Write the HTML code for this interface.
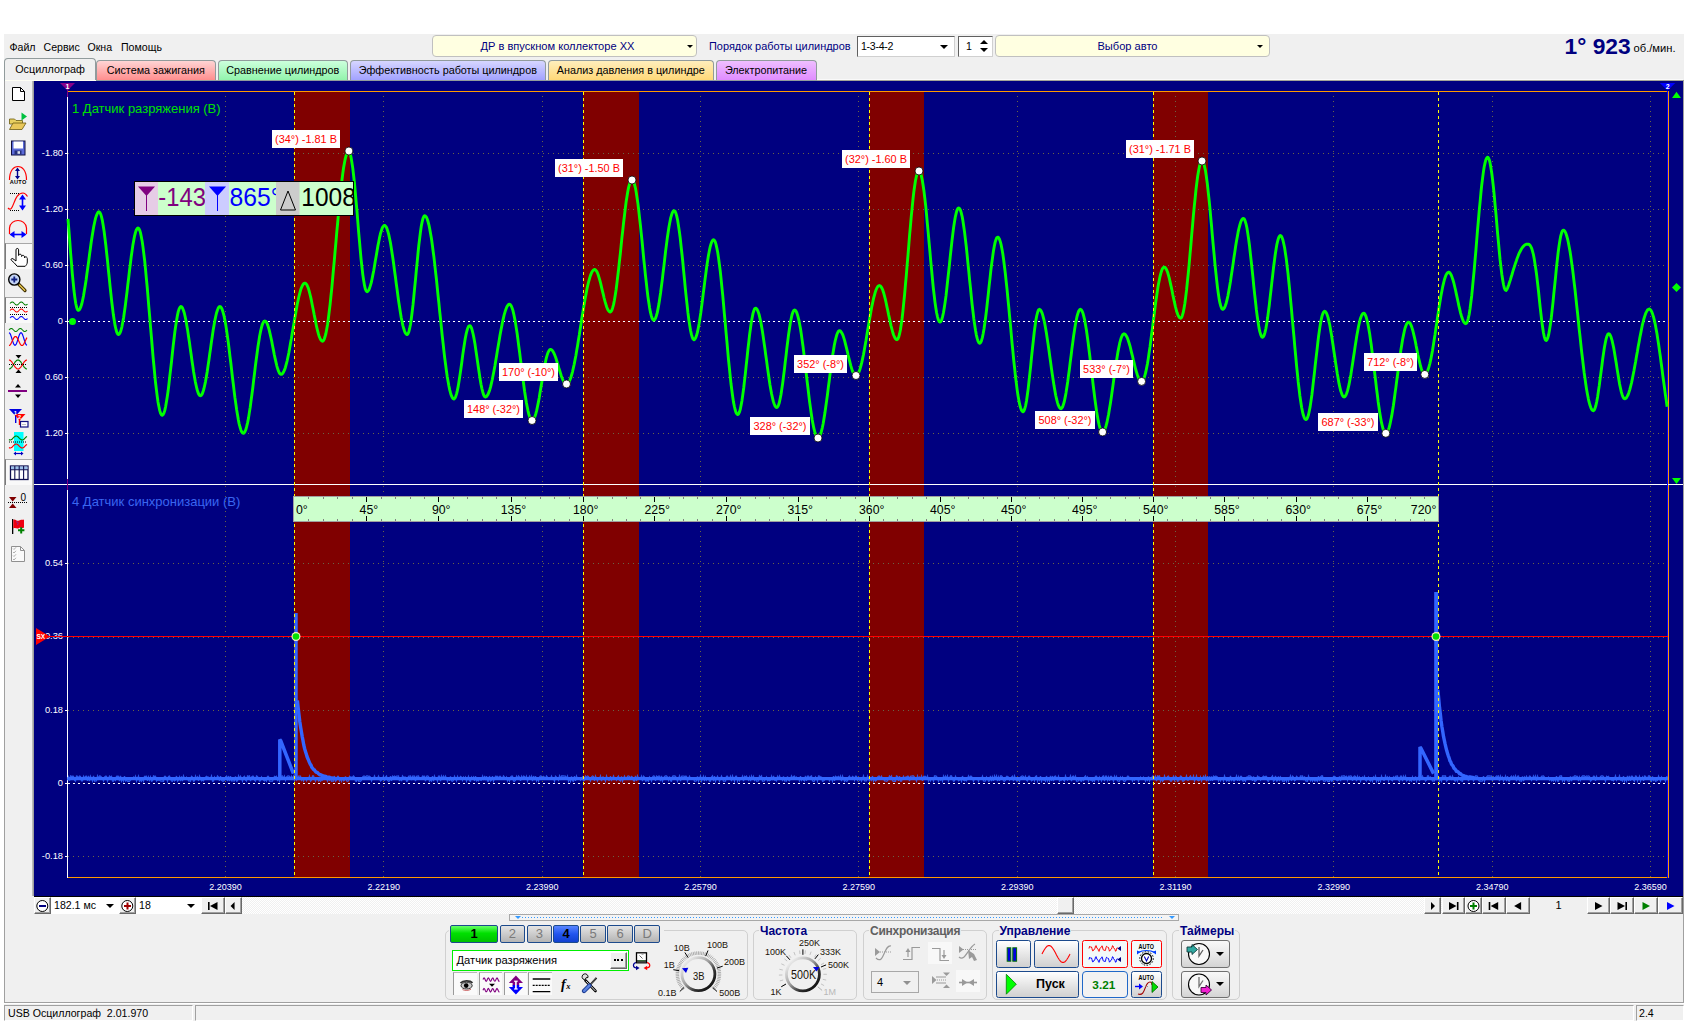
<!DOCTYPE html><html><head><meta charset="utf-8"><title>USB Осциллограф</title><style>
*{box-sizing:border-box;margin:0;padding:0}
html,body{width:1696px;height:1026px;overflow:hidden;background:#fff}
body{font-family:"Liberation Sans",sans-serif;font-size:11px;color:#000;position:relative}
.a{position:absolute}
#app{left:4px;top:34px;width:1680px;height:987px;background:#f0f0f0}
.menu span{position:absolute;top:41px;font-size:10.6px;white-space:pre}
.tab{position:absolute;top:60px;height:20px;border:1px solid #919b9c;border-bottom:none;border-radius:4px 4px 0 0;font-size:10.8px;text-align:center;line-height:19px;white-space:pre;overflow:hidden}
.dd{position:absolute;border:1px solid #c0c0c0;border-radius:4px;background:#ffffe1;color:#000080;font-size:11.1px;text-align:center;white-space:pre}
.arr{position:absolute;width:0;height:0;border-left:3.5px solid transparent;border-right:3.5px solid transparent;border-top:4px solid #000}
.btn3d{position:absolute;background:#f0f0f0;border:1px solid;border-color:#fff #696969 #696969 #fff;box-shadow:inset -1px -1px 0 #a0a0a0}
.grp{position:absolute;border:1px solid #d0d0d0;border-radius:5px}
.gt{position:absolute;font-weight:bold;font-size:12px;background:#f0f0f0;white-space:pre;line-height:12px;padding:0 1px}
.chb{position:absolute;top:925px;height:18px;border:1px solid #1c4a8c;border-radius:2px;text-align:center;font-size:13px;line-height:16px;color:#7a7a7a;background:linear-gradient(#e4e4e4,#b4b4b4)}
.cb{position:absolute;border:1px solid #1c4a8c;border-radius:2.5px;background:linear-gradient(#ffffff,#e2e2e2 60%,#d0d0d0)}
.kl{position:absolute;font-size:9px;white-space:pre;line-height:10px;color:#1a1208}
.st{position:absolute;top:1005px;height:16px;border:1px solid;border-color:#a0a0a0 #fff #fff #a0a0a0;font-size:10.6px;line-height:15px;padding-left:3px;white-space:pre}
</style></head><body>
<div id="app" class="a"></div>
<div class="menu"><span style="left:9.5px">Файл</span><span style="left:43.5px">Сервис</span><span style="left:87.5px">Окна</span><span style="left:121px">Помощь</span></div>
<div class="dd" style="left:432px;top:34.5px;width:265px;height:22px;line-height:20px;padding-right:14px">ДР в впускном коллекторе ХХ</div><div class="arr" style="left:686.5px;top:45px;border-left-width:3px;border-right-width:3px;border-top-width:3px"></div>
<div class="a" style="left:709px;top:40px;font-size:10.95px;color:#000080;white-space:pre">Порядок работы цилиндров</div>
<div class="a" style="left:857px;top:36px;width:98px;height:21px;background:#fff;border:1px solid #7f9db9;border-color:#606060 #d0d0d0 #d0d0d0 #606060;font-size:10.6px;line-height:19px;padding-left:3px;letter-spacing:-0.3px">1-3-4-2</div><div class="arr" style="left:940px;top:44.5px;border-left-width:4px;border-right-width:4px"></div>
<div class="a" style="left:958px;top:36px;width:35px;height:21px;background:#fff;border:1px solid;border-color:#606060 #d0d0d0 #d0d0d0 #606060;font-size:10.6px;line-height:19px;padding-left:7px">1</div>
<div class="a" style="left:979.5px;top:39.5px;width:0;height:0;border-left:4px solid transparent;border-right:4px solid transparent;border-bottom:4.5px solid #000"></div><div class="arr" style="left:979.5px;top:48px;border-left-width:4px;border-right-width:4px;border-top-width:4.5px"></div>
<div class="dd" style="left:995px;top:34.5px;width:275px;height:22px;line-height:20px;padding-right:10px">Выбор авто</div><div class="arr" style="left:1257px;top:45px;border-left-width:3px;border-right-width:3px;border-top-width:3px"></div>
<div class="a" style="left:1564.5px;top:33px;font-size:22.8px;font-weight:bold;color:#000080;white-space:pre;line-height:26px">1° 923</div>
<div class="a" style="left:1633.5px;top:42px;font-size:11.2px;white-space:pre">об./мин.</div>
<div class="a" style="left:4px;top:80px;width:1680px;height:1px;background:#919b9c"></div>
<div class="tab" style="left:95.5px;width:120.5px;background:linear-gradient(#ffd4d4 0%,#ff8e8e 100%)">Система зажигания</div>
<div class="tab" style="left:218px;width:129.5px;background:linear-gradient(#ccffdc 0%,#92f4ac 100%)">Сравнение цилиндров</div>
<div class="tab" style="left:349.5px;width:196.5px;background:linear-gradient(#d6d6ff 0%,#a2a2ff 100%)">Эффективность работы цилиндров</div>
<div class="tab" style="left:548px;width:165.5px;background:linear-gradient(#ffeebc 0%,#ffd878 100%)">Анализ давления в цилиндре</div>
<div class="tab" style="left:715.5px;width:101px;background:linear-gradient(#efbeff 0%,#e08cff 100%)">Электропитание</div>
<div class="tab" style="left:4px;top:58px;width:92px;height:22px;background:#f0f0f0;line-height:21px;border-color:#919b9c">Осциллограф</div><div class="a" style="left:5px;top:80px;width:91px;height:1px;background:#fffff4"></div><div class="a" style="left:817px;top:80px;width:866px;height:1px;background:#a4a498"></div><div class="a" style="left:817px;top:79px;width:866px;height:1px;background:#fafafa"></div>
<div class="a" style="left:4px;top:81px;width:1px;height:922px;background:#a0a0a0"></div>
<div class="a" style="left:32px;top:81px;width:2px;height:815px;background:linear-gradient(90deg,#c8c8c8,#909090)"></div>
<div class="a" style="left:5px;top:243px;width:27px;height:26px;background:#f9f9f9;border-left:1px solid #7a7a7a;border-top:1px solid #a8a8a8"></div>
<div class="a" style="left:5px;top:297px;width:27px;height:26px;background:#f9f9f9;border-left:1px solid #7a7a7a;border-top:1px solid #a8a8a8"></div>
<div class="a" style="left:5px;top:459px;width:27px;height:26px;background:#f9f9f9;border-left:1px solid #7a7a7a;border-top:1px solid #a8a8a8"></div>
<svg class="a" style="left:4px;top:81px;overflow:visible" width="30" height="490" viewBox="4 81 30 490" font-family="Liberation Sans,sans-serif">
<path d="M12.5,87.5 H20.5 L24.5,91.5 V100.5 H12.5 Z" fill="#fff" stroke="#000"/><path d="M20.5,87.5 V91.5 H24.5" fill="none" stroke="#000"/>
<path d="M9.5,119 H14.5 L16,120.5 H22.5 V124 H9.5Z" fill="#e8d060" stroke="#6b5a10" stroke-width="0.8"/>
<path d="M9.5,129.5 L13,123 H26 L22,129.5Z" fill="#e9c85a" stroke="#6b5a10" stroke-width="0.8"/>
<polygon points="21.5,112.5 21.5,120.5 27,116.5" fill="#00c040"/>
<rect x="11.5" y="141" width="13.5" height="14" fill="#5a6ad8" stroke="#101040"/>
<rect x="13.5" y="141.5" width="9.5" height="7" fill="#fff"/>
<rect x="14.5" y="150.5" width="7" height="4" fill="#26307a"/><rect x="17.5" y="151.2" width="2.5" height="2.6" fill="#d8e0f0"/>
<path d="M9.5,180 C9.5,170 14,166.5 18,166.5 C22,166.5 26.5,170 26.5,180" fill="none" stroke="#ff0000" stroke-width="1.2"/>
<path d="M17.5,169 V177" stroke="#000090" stroke-width="1.4"/><polygon points="15,171 20,171 17.5,167.5" fill="#000090"/><polygon points="15,176 20,176 17.5,179.5" fill="#000090"/>
<text x="9.7" y="184.3" font-size="5.6px" font-weight="bold" fill="#000" letter-spacing="0.3">AUTO</text>
<path d="M10,193.5 H20 M10,210.5 H20" stroke="#000" stroke-width="1" stroke-dasharray="1 1"/>
<path d="M8,208 C14,214 13,193 23,193 C25,193 26.5,195 27.5,196.5" fill="none" stroke="#ff0000" stroke-width="1.2"/>
<path d="M22.5,198 V206" stroke="#0000ff" stroke-width="1.6"/><polygon points="19,199.5 26,199.5 22.5,194.5" fill="#0000ff"/><polygon points="19,205.5 26,205.5 22.5,210.5" fill="#0000ff"/>
<path d="M9.5,234 V228 C10,223 14,220.5 18,220.5 C22,220.5 26,223 26.5,228 V234" fill="none" stroke="#ff0000" stroke-width="1.2"/>
<path d="M13,234.5 H23" stroke="#0000ff" stroke-width="1.6"/><polygon points="14.5,231 14.5,238 9.5,234.5" fill="#0000ff"/><polygon points="21.5,231 21.5,238 26.5,234.5" fill="#0000ff"/>
<path d="M16,249.8 C16,248 18.6,248 18.6,249.8 V255.5 C18.6,253.8 21.5,253.8 21.6,255.6 V256.5 C21.7,254.8 24.4,255 24.5,256.8 V257.8 C24.8,256.3 27.3,256.6 27.3,258.5 V262 C27.3,264 26.2,265.2 25.2,266.3 H17.2 C15.5,264 13.5,262 11.3,260.2 C10.5,259.2 11.8,258 13,258.8 L16,261 Z" fill="#fff" stroke="#000" stroke-width="1"/>
<path d="M18.5,284 L25,290.5" stroke="#403000" stroke-width="3.2" stroke-linecap="round"/><path d="M19.5,285 L24.7,290.2" stroke="#e8c850" stroke-width="1.4" stroke-linecap="round"/>
<circle cx="14.3" cy="279.5" r="5.6" fill="#c4d4f4" stroke="#000" stroke-width="1.4"/>
<path d="M11.3,279.5 H17.3 M14.3,276.5 V282.5" stroke="#102080" stroke-width="1.8"/>
<path d="M10.0,303.5 L10.5,303.0 L11.0,302.5 L11.5,302.2 L12.0,302.0 L12.5,302.0 L13.0,302.2 L13.5,302.5 L14.0,303.0 L14.5,303.5 L15.0,304.0 L15.5,304.5 L16.0,304.8 L16.5,305.0 L17.0,305.0 L17.5,304.8 L18.0,304.5 L18.5,304.0 L19.0,303.5 L19.5,303.0 L20.0,302.5 L20.5,302.2 L21.0,302.0 L21.5,302.0 L22.0,302.2 L22.5,302.5 L23.0,303.0 L23.5,303.5 L24.0,304.0 L24.5,304.5 L25.0,304.8 L25.5,305.0 L26.0,305.0 L26.5,304.8 L27.0,304.5 L27.5,304.0" fill="none" stroke="#008000" stroke-width="1.05"/>
<path d="M10.0,310.5 L10.5,310.0 L11.0,309.5 L11.5,309.2 L12.0,309.0 L12.5,309.0 L13.0,309.2 L13.5,309.5 L14.0,310.0 L14.5,310.5 L15.0,311.0 L15.5,311.5 L16.0,311.8 L16.5,312.0 L17.0,312.0 L17.5,311.8 L18.0,311.5 L18.5,311.0 L19.0,310.5 L19.5,310.0 L20.0,309.5 L20.5,309.2 L21.0,309.0 L21.5,309.0 L22.0,309.2 L22.5,309.5 L23.0,310.0 L23.5,310.5 L24.0,311.0 L24.5,311.5 L25.0,311.8 L25.5,312.0 L26.0,312.0 L26.5,311.8 L27.0,311.5 L27.5,311.0" fill="none" stroke="#ff0000" stroke-width="1.05"/>
<path d="M10.0,318.0 L10.5,317.5 L11.0,317.0 L11.5,316.7 L12.0,316.5 L12.5,316.5 L13.0,316.7 L13.5,317.0 L14.0,317.5 L14.5,318.0 L15.0,318.5 L15.5,319.0 L16.0,319.3 L16.5,319.5 L17.0,319.5 L17.5,319.3 L18.0,319.0 L18.5,318.5 L19.0,318.0 L19.5,317.5 L20.0,317.0 L20.5,316.7 L21.0,316.5 L21.5,316.5 L22.0,316.7 L22.5,317.0 L23.0,317.5 L23.5,318.0 L24.0,318.5 L24.5,319.0 L25.0,319.3 L25.5,319.5 L26.0,319.5 L26.5,319.3 L27.0,319.0 L27.5,318.5" fill="none" stroke="#0000ff" stroke-width="1.05"/>
<path d="M10,307.5 H27 M10,314.5 H27" stroke="#000" stroke-width="1" stroke-dasharray="1 1"/>
<path d="M9.0,330.0 L9.5,329.5 L10.0,329.0 L10.5,328.7 L11.0,328.5 L11.5,328.5 L12.0,328.7 L12.5,329.0 L13.0,329.5 L13.5,330.0 L14.0,330.5 L14.5,331.0 L15.0,331.3 L15.5,331.5 L16.0,331.5 L16.5,331.3 L17.0,331.0 L17.5,330.5 L18.0,330.0 L18.5,329.5 L19.0,329.0 L19.5,328.7 L20.0,328.5 L20.5,328.5 L21.0,328.7 L21.5,329.0 L22.0,329.5 L22.5,330.0 L23.0,330.5 L23.5,331.0 L24.0,331.3 L24.5,331.5 L25.0,331.5 L25.5,331.3 L26.0,331.0 L26.5,330.5 L27.0,330.0" fill="none" stroke="#008000" stroke-width="1.05"/>
<path d="M9.0,332.7 L9.5,332.9 L10.0,333.5 L10.5,334.5 L11.0,335.9 L11.5,337.4 L12.0,339.0 L12.5,340.6 L13.0,342.1 L13.5,343.5 L14.0,344.5 L14.5,345.1 L15.0,345.3 L15.5,345.1 L16.0,344.5 L16.5,343.5 L17.0,342.1 L17.5,340.6 L18.0,339.0 L18.5,337.4 L19.0,335.9 L19.5,334.5 L20.0,333.5 L20.5,332.9 L21.0,332.7 L21.5,332.9 L22.0,333.5 L22.5,334.5 L23.0,335.9 L23.5,337.4 L24.0,339.0 L24.5,340.6 L25.0,342.1 L25.5,343.5 L26.0,344.5 L26.5,345.1 L27.0,345.3" fill="none" stroke="#0000ff" stroke-width="1.2"/>
<path d="M9.0,345.5 L9.5,345.4 L10.0,345.0 L10.5,344.4 L11.0,343.6 L11.5,342.6 L12.0,341.5 L12.5,340.5 L13.0,339.4 L13.5,338.4 L14.0,337.6 L14.5,337.0 L15.0,336.6 L15.5,336.5 L16.0,336.6 L16.5,337.0 L17.0,337.6 L17.5,338.4 L18.0,339.4 L18.5,340.5 L19.0,341.5 L19.5,342.6 L20.0,343.6 L20.5,344.4 L21.0,345.0 L21.5,345.4 L22.0,345.5 L22.5,345.4 L23.0,345.0 L23.5,344.4 L24.0,343.6 L24.5,342.6 L25.0,341.5 L25.5,340.5 L26.0,339.4 L26.5,338.4 L27.0,337.6" fill="none" stroke="#ff0000" stroke-width="1.2"/>
<polygon points="15.5,355 21.5,355 18.5,358.5" fill="#000"/><polygon points="15.5,373 21.5,373 18.5,369.5" fill="#000"/>
<path d="M9.0,369.0 L9.5,368.9 L10.0,368.7 L10.5,368.4 L11.0,367.9 L11.5,367.4 L12.0,366.8 L12.5,366.0 L13.0,365.3 L13.5,364.5 L14.0,363.7 L14.5,363.0 L15.0,362.2 L15.5,361.6 L16.0,361.1 L16.5,360.6 L17.0,360.3 L17.5,360.1 L18.0,360.0 L18.5,360.1 L19.0,360.3 L19.5,360.6 L20.0,361.1 L20.5,361.6 L21.0,362.2 L21.5,363.0 L22.0,363.7 L22.5,364.5 L23.0,365.3 L23.5,366.0 L24.0,366.8 L24.5,367.4 L25.0,367.9 L25.5,368.4 L26.0,368.7 L26.5,368.9 L27.0,369.0" fill="none" stroke="#008000" stroke-width="1.2"/>
<path d="M9.0,360.0 L9.5,360.1 L10.0,360.3 L10.5,360.6 L11.0,361.1 L11.5,361.6 L12.0,362.2 L12.5,363.0 L13.0,363.7 L13.5,364.5 L14.0,365.3 L14.5,366.0 L15.0,366.8 L15.5,367.4 L16.0,367.9 L16.5,368.4 L17.0,368.7 L17.5,368.9 L18.0,369.0 L18.5,368.9 L19.0,368.7 L19.5,368.4 L20.0,367.9 L20.5,367.4 L21.0,366.8 L21.5,366.0 L22.0,365.3 L22.5,364.5 L23.0,363.7 L23.5,363.0 L24.0,362.2 L24.5,361.6 L25.0,361.1 L25.5,360.6 L26.0,360.3 L26.5,360.1 L27.0,360.0" fill="none" stroke="#ff0000" stroke-width="1.2"/>
<path d="M9,364.5 H26" stroke="#000" stroke-width="1" stroke-dasharray="1 1"/>
<polygon points="15,387.5 21,387.5 18,384" fill="#000"/><polygon points="15,394.5 21,394.5 18,398" fill="#000"/>
<rect x="8" y="390" width="19" height="2" fill="#800080"/>
<polygon points="9,409 22,409 15.5,416" fill="#0000e0"/><rect x="15" y="415" width="1.4" height="8" fill="#0000e0"/>
<polygon points="14,414 25.5,414 19.5,420.5" fill="#ff0000"/><rect x="18.8" y="419" width="1.4" height="6" fill="#ff0000"/>
<text x="13.8" y="414.5" font-size="6px" font-weight="bold" fill="#fff">1</text><text x="18" y="419.3" font-size="5.5px" font-weight="bold" fill="#fff">2</text>
<rect x="20.5" y="421.5" width="7.5" height="5.5" fill="#fff" stroke="#101080" stroke-width="1.2"/><path d="M22.5,424.5 H26" stroke="#606060" stroke-width="0.8" stroke-dasharray="1 1"/>
<rect x="14" y="432" width="9.5" height="19" fill="#00ffff"/>
<path d="M9.0,439.6 L9.5,439.9 L10.0,440.0 L10.5,440.0 L11.0,439.8 L11.5,439.6 L12.0,439.2 L12.5,438.7 L13.0,438.2 L13.5,437.7 L14.0,437.2 L14.5,436.7 L15.0,436.4 L15.5,436.1 L16.0,436.0 L16.5,436.0 L17.0,436.2 L17.5,436.4 L18.0,436.8 L18.5,437.3 L19.0,437.8 L19.5,438.3 L20.0,438.8 L20.5,439.3 L21.0,439.6 L21.5,439.9 L22.0,440.0 L22.5,440.0 L23.0,439.8 L23.5,439.6 L24.0,439.2 L24.5,438.7 L25.0,438.2 L25.5,437.7 L26.0,437.2 L26.5,436.7 L27.0,436.4" fill="none" stroke="#008000" stroke-width="1.2"/>
<path d="M9.0,447.6 L9.5,447.9 L10.0,448.0 L10.5,448.0 L11.0,447.8 L11.5,447.6 L12.0,447.2 L12.5,446.7 L13.0,446.2 L13.5,445.7 L14.0,445.2 L14.5,444.7 L15.0,444.4 L15.5,444.1 L16.0,444.0 L16.5,444.0 L17.0,444.2 L17.5,444.4 L18.0,444.8 L18.5,445.3 L19.0,445.8 L19.5,446.3 L20.0,446.8 L20.5,447.3 L21.0,447.6 L21.5,447.9 L22.0,448.0 L22.5,448.0 L23.0,447.8 L23.5,447.6 L24.0,447.2 L24.5,446.7 L25.0,446.2 L25.5,445.7 L26.0,445.2 L26.5,444.7 L27.0,444.4" fill="none" stroke="#ff0000" stroke-width="1.2"/>
<path d="M9,442 H27" stroke="#000" stroke-width="1" stroke-dasharray="1 1"/>
<path d="M15,453.5 H22" stroke="#0000c0" stroke-width="1.2"/><polygon points="16,451.5 16,455.5 13.5,453.5" fill="#0000c0"/><polygon points="21,451.5 21,455.5 23.5,453.5" fill="#0000c0"/>
<rect x="10.5" y="466" width="17.5" height="13.5" fill="#fff" stroke="#101050" stroke-width="1.3"/><rect x="11" y="466.5" width="16.5" height="3" fill="#9cc0ea"/>
<path d="M14.8,466 V479.5 M19.2,466 V479.5 M23.6,466 V479.5 M10.5,469.8 H28" stroke="#101050" stroke-width="1.1"/>
<polygon points="9,497 16.5,497 12.7,501.5" fill="#800000"/><polygon points="9,508 16.5,508 12.7,503.5" fill="#800000"/>
<path d="M8,502.5 H27" stroke="#000" stroke-width="1" stroke-dasharray="1 1"/>
<text x="20.5" y="500.5" font-size="10px" fill="#000">0</text>
<rect x="12" y="519" width="1.3" height="15" fill="#000"/>
<path d="M13.3,520 C15,518 17,522 19,520.5 C21,519 22.5,520 24,519.5 V527.5 C22,529 20.5,527 19,528 C17,529.5 15.5,527 13.3,528.5Z" fill="#ee0010"/>
<path d="M16,522 c2,-1 3,2 1,3" stroke="#8030a0" stroke-width="1" fill="none"/>
<path d="M18,530.3 H24.4 M21.2,527.2 V533.5" stroke="#008000" stroke-width="2"/>
<path d="M11.5,546.5 H20.5 L24.5,550.5 V561.5 H11.5Z" fill="#fafafa" stroke="#909090"/><path d="M20.5,546.5 V550.5 H24.5" fill="none" stroke="#909090"/>
<path d="M13,548.5 l1,1 l2,-2.2" fill="none" stroke="#a8a8a8" stroke-width="0.9"/>
<path d="M13,552 l1,1 l2,-2.2" fill="none" stroke="#a8a8a8" stroke-width="0.9"/>
<path d="M13,555.5 l1,1 l2,-2.2" fill="none" stroke="#a8a8a8" stroke-width="0.9"/>
<path d="M13,559 l1,1 l2,-2.2" fill="none" stroke="#a8a8a8" stroke-width="0.9"/>
</svg>
<svg id="plot" width="1649" height="815" viewBox="34 81 1649 815" style="position:absolute;left:34px;top:81px;font-family:'Liberation Sans',sans-serif">
<rect x="34" y="81" width="1650" height="815" fill="#000080"/>
<rect x="294" y="92" width="56" height="785" fill="#800000"/>
<rect x="583" y="92" width="56" height="785" fill="#800000"/>
<rect x="869" y="92" width="55" height="785" fill="#800000"/>
<rect x="1153" y="92" width="55" height="785" fill="#800000"/>
<g stroke="#6a6446" stroke-width="1" stroke-dasharray="1 4" shape-rendering="crispEdges">
<line x1="68" y1="153.5" x2="1667" y2="153.5"/>
<line x1="68" y1="209.5" x2="1667" y2="209.5"/>
<line x1="68" y1="265.5" x2="1667" y2="265.5"/>
<line x1="68" y1="377.5" x2="1667" y2="377.5"/>
<line x1="68" y1="433.5" x2="1667" y2="433.5"/>
<line x1="68" y1="563.5" x2="1667" y2="563.5"/>
<line x1="68" y1="637.5" x2="1667" y2="637.5"/>
<line x1="68" y1="710.5" x2="1667" y2="710.5"/>
<line x1="68" y1="856.5" x2="1667" y2="856.5"/>
<line x1="225.5" y1="96" x2="225.5" y2="484"/>
<line x1="225.5" y1="486" x2="225.5" y2="877"/>
<line x1="383.5" y1="96" x2="383.5" y2="484"/>
<line x1="383.5" y1="486" x2="383.5" y2="877"/>
<line x1="542.5" y1="96" x2="542.5" y2="484"/>
<line x1="542.5" y1="486" x2="542.5" y2="877"/>
<line x1="700.5" y1="96" x2="700.5" y2="484"/>
<line x1="700.5" y1="486" x2="700.5" y2="877"/>
<line x1="858.5" y1="96" x2="858.5" y2="484"/>
<line x1="858.5" y1="486" x2="858.5" y2="877"/>
<line x1="1017.5" y1="96" x2="1017.5" y2="484"/>
<line x1="1017.5" y1="486" x2="1017.5" y2="877"/>
<line x1="1175.5" y1="96" x2="1175.5" y2="484"/>
<line x1="1175.5" y1="486" x2="1175.5" y2="877"/>
<line x1="1333.5" y1="96" x2="1333.5" y2="484"/>
<line x1="1333.5" y1="486" x2="1333.5" y2="877"/>
<line x1="1492.5" y1="96" x2="1492.5" y2="484"/>
<line x1="1492.5" y1="486" x2="1492.5" y2="877"/>
<line x1="1650.5" y1="96" x2="1650.5" y2="484"/>
<line x1="1650.5" y1="486" x2="1650.5" y2="877"/>
</g>
<g stroke="#ffffff" stroke-width="1" stroke-dasharray="2 3" shape-rendering="crispEdges">
<line x1="68" y1="321.5" x2="1667" y2="321.5"/>
<line x1="68" y1="783.5" x2="1668" y2="783.5"/>
</g>
<g shape-rendering="crispEdges">
<line x1="68" y1="91.5" x2="1669" y2="91.5" stroke="#ff9900"/>
<line x1="68" y1="877.5" x2="1669" y2="877.5" stroke="#ff9900"/>
<line x1="1668.5" y1="91" x2="1668.5" y2="878" stroke="#ff9900"/>
<line x1="67.5" y1="97" x2="67.5" y2="878" stroke="#ffffff"/>
<line x1="34" y1="484.5" x2="1684" y2="484.5" stroke="#ffffff"/>
<line x1="67.5" y1="479" x2="67.5" y2="490" stroke="#800080"/>
<line x1="1667.5" y1="91" x2="1667.5" y2="878" stroke="#0000ff"/>
</g>
<g fill="#ffffff" font-size="9.3px" text-anchor="end">
<text x="63" y="156.2">-1.80</text>
<rect x="65" y="153" width="2" height="1"/>
<text x="63" y="212.2">-1.20</text>
<rect x="65" y="209" width="2" height="1"/>
<text x="63" y="268.2">-0.60</text>
<rect x="65" y="265" width="2" height="1"/>
<text x="63" y="324.2">0</text>
<rect x="65" y="321" width="2" height="1"/>
<text x="63" y="380.2">0.60</text>
<rect x="65" y="377" width="2" height="1"/>
<text x="63" y="436.2">1.20</text>
<rect x="65" y="433" width="2" height="1"/>
<text x="63" y="566.2">0.54</text>
<rect x="65" y="563" width="2" height="1"/>
<text x="63" y="639.2">0.36</text>
<rect x="65" y="636" width="2" height="1"/>
<text x="63" y="713.2">0.18</text>
<rect x="65" y="710" width="2" height="1"/>
<text x="63" y="786.2">0</text>
<rect x="65" y="783" width="2" height="1"/>
<text x="63" y="859.2">-0.18</text>
<rect x="65" y="856" width="2" height="1"/>
</g>
<g fill="#ffffff" font-size="9px" text-anchor="middle">
<text x="225.5" y="890">2.20390</text>
<text x="383.8" y="890">2.22190</text>
<text x="542.2" y="890">2.23990</text>
<text x="700.5" y="890">2.25790</text>
<text x="858.8" y="890">2.27590</text>
<text x="1017.2" y="890">2.29390</text>
<text x="1175.5" y="890">2.31190</text>
<text x="1333.8" y="890">2.32990</text>
<text x="1492.2" y="890">2.34790</text>
<text x="1650.5" y="890">2.36590</text>
</g>
<text x="72" y="113" font-size="13px" fill="#00e000">1 Датчик разряжения (В)</text>
<text x="72" y="506" font-size="13px" fill="#3a66f0">4 Датчик синхронизации (В)</text>
<line x1="46" y1="636.5" x2="1668" y2="636.5" stroke="#ff0000" shape-rendering="crispEdges"/>
<polygon points="36,628 36,645 50,636.5" fill="#ff0000"/>
<text x="36.5" y="639" font-size="6.5px" font-weight="bold" fill="#fff">SX</text>
<line x1="67.5" y1="778.6" x2="1668" y2="778.6" stroke="#3366ff" stroke-width="3.3"/><path d="M67.5,780.1 L68.5,777.1 L69.5,780.8 L70.5,776.0 L71.5,776.4 L72.5,776.2 L73.5,776.4 L74.5,780.1 L75.5,781.0 L76.5,776.0 L77.5,776.2 L78.5,778.6 L79.5,776.0 L80.5,776.4 L81.5,780.8 L82.5,780.8 L83.5,776.4 L84.5,778.6 L85.5,776.4 L86.5,776.2 L87.5,780.8 L88.5,776.0 L89.5,781.0 L90.5,776.4 L91.5,778.6 L92.5,781.0 L93.5,776.0 L94.5,781.0 L95.5,781.0 L96.5,780.8 L97.5,776.0 L98.5,778.6 L99.5,776.0 L100.5,776.2 L101.5,777.1 L102.5,778.6 L103.5,780.8 L104.5,777.1 L105.5,776.2 L106.5,776.4 L107.5,781.0 L108.5,778.6 L109.5,776.2 L110.5,777.1 L111.5,776.4 L112.5,781.0 L113.5,781.0 L114.5,778.6 L115.5,780.1 L116.5,776.4 L117.5,776.2 L118.5,776.4 L119.5,781.0 L120.5,776.0 L121.5,781.0 L122.5,778.6 L123.5,781.2 L124.5,776.2 L125.5,780.8 L126.5,780.1 L127.5,781.2 L128.5,781.0 L129.5,781.2 L130.5,780.1 L131.5,778.6 L132.5,778.6 L133.5,777.1 L134.5,778.6 L135.5,776.4 L136.5,781.0 L137.5,778.6 L138.5,776.2 L139.5,781.2 L140.5,780.1 L141.5,781.2 L142.5,778.6 L143.5,781.0 L144.5,776.4 L145.5,776.4 L146.5,776.2 L147.5,780.8 L148.5,777.1 L149.5,780.1 L150.5,777.1 L151.5,781.2 L152.5,780.8 L153.5,776.0 L154.5,776.4 L155.5,776.2 L156.5,781.0 L157.5,780.1 L158.5,780.1 L159.5,780.1 L160.5,781.0 L161.5,781.2 L162.5,781.0 L163.5,781.2 L164.5,776.4 L165.5,776.4 L166.5,778.6 L167.5,781.2 L168.5,776.4 L169.5,776.0 L170.5,778.6 L171.5,781.0 L172.5,781.2 L173.5,778.6 L174.5,780.8 L175.5,780.1 L176.5,776.0 L177.5,781.2 L178.5,780.1 L179.5,777.1 L180.5,781.0 L181.5,776.4 L182.5,781.2 L183.5,776.0 L184.5,778.6 L185.5,778.6 L186.5,777.1 L187.5,778.6 L188.5,780.8 L189.5,780.8 L190.5,781.2 L191.5,776.4 L192.5,777.1 L193.5,781.2 L194.5,780.8 L195.5,776.2 L196.5,778.6 L197.5,777.1 L198.5,780.8 L199.5,776.2 L200.5,778.6 L201.5,780.8 L202.5,780.1 L203.5,780.8 L204.5,778.6 L205.5,777.1 L206.5,776.4 L207.5,777.1 L208.5,777.1 L209.5,778.6 L210.5,778.6 L211.5,776.0 L212.5,781.2 L213.5,781.0 L214.5,777.1 L215.5,778.6 L216.5,778.6 L217.5,776.0 L218.5,777.1 L219.5,780.8 L220.5,776.2 L221.5,780.1 L222.5,781.0 L223.5,781.0 L224.5,780.1 L225.5,777.1 L226.5,776.2 L227.5,781.0 L228.5,776.0 L229.5,781.2 L230.5,776.2 L231.5,780.8 L232.5,780.8 L233.5,780.8 L234.5,780.8 L235.5,776.4 L236.5,781.2 L237.5,780.8 L238.5,776.0 L239.5,778.6 L240.5,776.4 L241.5,778.6 L242.5,781.2 L243.5,777.1 L244.5,776.4 L245.5,780.1 L246.5,781.0 L247.5,776.0 L248.5,776.4 L249.5,776.0 L250.5,781.0 L251.5,777.1 L252.5,776.2 L253.5,776.4 L254.5,780.1 L255.5,781.0 L256.5,776.0 L257.5,776.4 L258.5,778.6 L259.5,781.0 L260.5,780.8 L261.5,777.1 L262.5,778.6 L263.5,780.1 L264.5,781.0 L265.5,780.1 L266.5,781.2 L267.5,776.4 L268.5,776.4 L269.5,781.2 L270.5,781.2 L271.5,781.2 L272.5,781.2 L273.5,778.6 L274.5,776.4 L275.5,777.1 L276.5,776.4 L277.5,780.1 L278.5,778.6 L279.5,781.2 L280.5,777.1 L281.5,776.2 L282.5,776.0 L283.5,778.6 L284.5,776.2 L285.5,780.1 L286.5,777.1 L287.5,776.2 L288.5,776.0 L289.5,776.2 L290.5,778.6 L291.5,776.4 L292.5,778.6 L293.5,776.2 L294.5,780.1 L295.5,777.1 L296.5,780.1 L297.5,778.6 L298.5,776.2 L299.5,776.2 L300.5,776.2 L301.5,780.1 L302.5,778.6 L303.5,781.0 L304.5,778.6 L305.5,778.6 L306.5,780.8 L307.5,778.6 L308.5,778.6 L309.5,776.2 L310.5,781.2 L311.5,780.1 L312.5,776.0 L313.5,776.0 L314.5,778.6 L315.5,781.2 L316.5,778.6 L317.5,778.6 L318.5,781.0 L319.5,780.1 L320.5,781.2 L321.5,780.1 L322.5,780.1 L323.5,776.4 L324.5,778.6 L325.5,776.4 L326.5,778.6 L327.5,781.2 L328.5,778.6 L329.5,780.1 L330.5,778.6 L331.5,781.2 L332.5,781.0 L333.5,781.0 L334.5,776.0 L335.5,781.2 L336.5,780.1 L337.5,776.4 L338.5,776.4 L339.5,780.8 L340.5,778.6 L341.5,781.2 L342.5,777.1 L343.5,780.8 L344.5,780.1 L345.5,776.4 L346.5,780.8 L347.5,781.2 L348.5,780.8 L349.5,776.4 L350.5,777.1 L351.5,777.1 L352.5,777.1 L353.5,776.0 L354.5,777.1 L355.5,781.0 L356.5,781.2 L357.5,777.1 L358.5,781.0 L359.5,781.0 L360.5,781.2 L361.5,780.1 L362.5,777.1 L363.5,776.2 L364.5,776.2 L365.5,777.1 L366.5,776.0 L367.5,776.0 L368.5,776.4 L369.5,776.2 L370.5,777.1 L371.5,780.8 L372.5,778.6 L373.5,778.6 L374.5,776.0 L375.5,778.6 L376.5,778.6 L377.5,778.6 L378.5,776.2 L379.5,778.6 L380.5,781.0 L381.5,780.1 L382.5,778.6 L383.5,776.2 L384.5,780.8 L385.5,777.1 L386.5,776.0 L387.5,780.1 L388.5,781.2 L389.5,781.0 L390.5,776.2 L391.5,780.8 L392.5,776.2 L393.5,777.1 L394.5,776.2 L395.5,777.1 L396.5,776.2 L397.5,776.2 L398.5,776.0 L399.5,781.2 L400.5,777.1 L401.5,781.0 L402.5,776.0 L403.5,777.1 L404.5,777.1 L405.5,777.1 L406.5,781.2 L407.5,781.0 L408.5,776.4 L409.5,776.2 L410.5,776.0 L411.5,780.1 L412.5,776.2 L413.5,776.2 L414.5,776.2 L415.5,781.2 L416.5,776.4 L417.5,776.2 L418.5,776.0 L419.5,778.6 L420.5,778.6 L421.5,778.6 L422.5,776.0 L423.5,776.4 L424.5,776.2 L425.5,781.2 L426.5,776.2 L427.5,776.0 L428.5,776.4 L429.5,781.2 L430.5,780.1 L431.5,781.0 L432.5,776.2 L433.5,781.0 L434.5,776.2 L435.5,778.6 L436.5,778.6 L437.5,781.2 L438.5,776.2 L439.5,776.2 L440.5,781.2 L441.5,776.2 L442.5,778.6 L443.5,776.2 L444.5,778.6 L445.5,776.2 L446.5,778.6 L447.5,781.2 L448.5,777.1 L449.5,780.8 L450.5,776.4 L451.5,780.8 L452.5,781.2 L453.5,780.1 L454.5,776.4 L455.5,778.6 L456.5,780.8 L457.5,776.4 L458.5,778.6 L459.5,778.6 L460.5,776.4 L461.5,777.1 L462.5,780.1 L463.5,777.1 L464.5,778.6 L465.5,777.1 L466.5,781.2 L467.5,778.6 L468.5,776.4 L469.5,780.8 L470.5,781.2 L471.5,777.1 L472.5,778.6 L473.5,777.1 L474.5,780.8 L475.5,776.2 L476.5,780.8 L477.5,780.1 L478.5,780.8 L479.5,778.6 L480.5,780.1 L481.5,780.1 L482.5,776.4 L483.5,780.1 L484.5,776.0 L485.5,780.1 L486.5,776.2 L487.5,781.2 L488.5,781.2 L489.5,776.0 L490.5,780.8 L491.5,780.1 L492.5,776.2 L493.5,781.0 L494.5,778.6 L495.5,776.2 L496.5,776.4 L497.5,776.4 L498.5,778.6 L499.5,776.4 L500.5,776.4 L501.5,778.6 L502.5,778.6 L503.5,776.0 L504.5,777.1 L505.5,778.6 L506.5,777.1 L507.5,780.8 L508.5,778.6 L509.5,780.8 L510.5,777.1 L511.5,776.2 L512.5,776.2 L513.5,781.0 L514.5,781.2 L515.5,780.1 L516.5,776.4 L517.5,778.6 L518.5,776.0 L519.5,777.1 L520.5,780.8 L521.5,776.4 L522.5,778.6 L523.5,776.0 L524.5,776.4 L525.5,778.6 L526.5,776.4 L527.5,781.0 L528.5,778.6 L529.5,776.4 L530.5,778.6 L531.5,776.4 L532.5,781.2 L533.5,776.0 L534.5,780.1 L535.5,776.2 L536.5,780.8 L537.5,778.6 L538.5,781.0 L539.5,777.1 L540.5,776.0 L541.5,776.2 L542.5,778.6 L543.5,776.4 L544.5,777.1 L545.5,778.6 L546.5,776.0 L547.5,777.1 L548.5,778.6 L549.5,778.6 L550.5,778.6 L551.5,776.2 L552.5,778.6 L553.5,778.6 L554.5,781.2 L555.5,776.2 L556.5,777.1 L557.5,778.6 L558.5,780.1 L559.5,776.0 L560.5,778.6 L561.5,776.0 L562.5,776.0 L563.5,776.0 L564.5,776.2 L565.5,776.2 L566.5,778.6 L567.5,776.2 L568.5,781.2 L569.5,778.6 L570.5,781.2 L571.5,776.4 L572.5,780.8 L573.5,781.2 L574.5,776.2 L575.5,780.8 L576.5,776.2 L577.5,778.6 L578.5,778.6 L579.5,778.6 L580.5,780.1 L581.5,778.6 L582.5,777.1 L583.5,780.8 L584.5,780.1 L585.5,776.0 L586.5,777.1 L587.5,776.0 L588.5,776.4 L589.5,778.6 L590.5,780.8 L591.5,777.1 L592.5,776.0 L593.5,776.4 L594.5,780.8 L595.5,776.2 L596.5,778.6 L597.5,781.0 L598.5,778.6 L599.5,778.6 L600.5,776.0 L601.5,781.2 L602.5,777.1 L603.5,777.1 L604.5,778.6 L605.5,781.2 L606.5,776.0 L607.5,778.6 L608.5,780.1 L609.5,780.1 L610.5,776.2 L611.5,780.1 L612.5,778.6 L613.5,776.0 L614.5,778.6 L615.5,778.6 L616.5,780.1 L617.5,777.1 L618.5,776.0 L619.5,780.1 L620.5,780.8 L621.5,776.4 L622.5,781.2 L623.5,778.6 L624.5,776.2 L625.5,778.6 L626.5,778.6 L627.5,776.2 L628.5,776.0 L629.5,776.4 L630.5,778.6 L631.5,776.4 L632.5,777.1 L633.5,780.8 L634.5,781.0 L635.5,776.0 L636.5,780.8 L637.5,776.0 L638.5,778.6 L639.5,778.6 L640.5,778.6 L641.5,776.4 L642.5,781.0 L643.5,776.2 L644.5,777.1 L645.5,781.0 L646.5,780.8 L647.5,780.1 L648.5,781.2 L649.5,777.1 L650.5,778.6 L651.5,781.0 L652.5,777.1 L653.5,776.0 L654.5,776.2 L655.5,780.8 L656.5,776.2 L657.5,777.1 L658.5,776.2 L659.5,776.2 L660.5,781.0 L661.5,776.0 L662.5,781.0 L663.5,778.6 L664.5,776.4 L665.5,776.0 L666.5,776.0 L667.5,777.1 L668.5,780.1 L669.5,776.4 L670.5,780.8 L671.5,781.2 L672.5,776.2 L673.5,776.0 L674.5,776.0 L675.5,776.2 L676.5,778.6 L677.5,781.2 L678.5,778.6 L679.5,776.0 L680.5,781.2 L681.5,776.4 L682.5,776.2 L683.5,776.2 L684.5,776.4 L685.5,776.2 L686.5,776.4 L687.5,781.2 L688.5,778.6 L689.5,776.4 L690.5,778.6 L691.5,778.6 L692.5,778.6 L693.5,778.6 L694.5,781.2 L695.5,781.2 L696.5,780.8 L697.5,776.4 L698.5,781.2 L699.5,778.6 L700.5,776.0 L701.5,781.0 L702.5,778.6 L703.5,776.4 L704.5,781.0 L705.5,777.1 L706.5,780.1 L707.5,778.6 L708.5,778.6 L709.5,781.0 L710.5,781.0 L711.5,777.1 L712.5,776.0 L713.5,781.2 L714.5,776.0 L715.5,781.2 L716.5,778.6 L717.5,776.4 L718.5,778.6 L719.5,781.2 L720.5,778.6 L721.5,776.2 L722.5,778.6 L723.5,781.2 L724.5,781.2 L725.5,781.2 L726.5,776.4 L727.5,776.2 L728.5,778.6 L729.5,778.6 L730.5,776.4 L731.5,781.2 L732.5,776.0 L733.5,778.6 L734.5,781.2 L735.5,776.4 L736.5,776.2 L737.5,781.2 L738.5,778.6 L739.5,780.8 L740.5,778.6 L741.5,778.6 L742.5,776.4 L743.5,781.0 L744.5,776.4 L745.5,777.1 L746.5,776.2 L747.5,778.6 L748.5,780.1 L749.5,777.1 L750.5,781.0 L751.5,776.2 L752.5,778.6 L753.5,776.4 L754.5,780.1 L755.5,778.6 L756.5,781.2 L757.5,781.2 L758.5,780.8 L759.5,776.0 L760.5,777.1 L761.5,776.0 L762.5,781.2 L763.5,781.2 L764.5,780.8 L765.5,778.6 L766.5,777.1 L767.5,780.8 L768.5,780.1 L769.5,780.8 L770.5,780.1 L771.5,776.4 L772.5,780.1 L773.5,776.0 L774.5,780.1 L775.5,780.1 L776.5,780.8 L777.5,776.4 L778.5,778.6 L779.5,776.0 L780.5,778.6 L781.5,778.6 L782.5,780.1 L783.5,776.4 L784.5,780.8 L785.5,780.8 L786.5,781.0 L787.5,776.4 L788.5,780.1 L789.5,780.8 L790.5,778.6 L791.5,776.0 L792.5,778.6 L793.5,776.4 L794.5,776.0 L795.5,778.6 L796.5,777.1 L797.5,778.6 L798.5,778.6 L799.5,780.8 L800.5,776.2 L801.5,780.1 L802.5,778.6 L803.5,780.1 L804.5,780.8 L805.5,776.0 L806.5,780.8 L807.5,776.2 L808.5,776.2 L809.5,778.6 L810.5,776.4 L811.5,776.0 L812.5,780.8 L813.5,781.2 L814.5,781.0 L815.5,777.1 L816.5,778.6 L817.5,781.2 L818.5,776.0 L819.5,776.2 L820.5,777.1 L821.5,777.1 L822.5,781.2 L823.5,780.8 L824.5,780.1 L825.5,778.6 L826.5,778.6 L827.5,778.6 L828.5,778.6 L829.5,780.8 L830.5,778.6 L831.5,778.6 L832.5,781.2 L833.5,776.2 L834.5,780.8 L835.5,776.4 L836.5,777.1 L837.5,777.1 L838.5,776.4 L839.5,778.6 L840.5,776.2 L841.5,781.2 L842.5,776.2 L843.5,778.6 L844.5,781.2 L845.5,780.1 L846.5,781.2 L847.5,780.8 L848.5,777.1 L849.5,776.2 L850.5,778.6 L851.5,778.6 L852.5,776.4 L853.5,777.1 L854.5,780.1 L855.5,776.2 L856.5,776.4 L857.5,780.1 L858.5,778.6 L859.5,780.1 L860.5,778.6 L861.5,781.0 L862.5,778.6 L863.5,776.0 L864.5,780.8 L865.5,780.8 L866.5,780.8 L867.5,776.2 L868.5,778.6 L869.5,780.8 L870.5,778.6 L871.5,780.1 L872.5,776.0 L873.5,781.2 L874.5,778.6 L875.5,781.0 L876.5,780.1 L877.5,777.1 L878.5,776.2 L879.5,776.2 L880.5,778.6 L881.5,776.4 L882.5,778.6 L883.5,778.6 L884.5,780.8 L885.5,780.8 L886.5,781.2 L887.5,780.8 L888.5,778.6 L889.5,776.0 L890.5,777.1 L891.5,776.0 L892.5,780.8 L893.5,781.2 L894.5,781.0 L895.5,781.2 L896.5,776.0 L897.5,776.4 L898.5,780.8 L899.5,776.2 L900.5,781.2 L901.5,781.2 L902.5,778.6 L903.5,776.4 L904.5,778.6 L905.5,777.1 L906.5,777.1 L907.5,776.2 L908.5,776.4 L909.5,781.2 L910.5,776.4 L911.5,776.2 L912.5,776.0 L913.5,776.0 L914.5,777.1 L915.5,778.6 L916.5,781.0 L917.5,776.0 L918.5,778.6 L919.5,777.1 L920.5,778.6 L921.5,776.2 L922.5,780.8 L923.5,776.4 L924.5,776.4 L925.5,776.4 L926.5,778.6 L927.5,776.2 L928.5,781.0 L929.5,778.6 L930.5,780.8 L931.5,778.6 L932.5,778.6 L933.5,781.0 L934.5,776.0 L935.5,776.0 L936.5,776.2 L937.5,778.6 L938.5,781.2 L939.5,778.6 L940.5,780.1 L941.5,778.6 L942.5,781.2 L943.5,776.2 L944.5,778.6 L945.5,776.2 L946.5,778.6 L947.5,776.0 L948.5,780.8 L949.5,778.6 L950.5,776.0 L951.5,776.0 L952.5,778.6 L953.5,781.2 L954.5,780.8 L955.5,776.4 L956.5,778.6 L957.5,778.6 L958.5,780.8 L959.5,780.1 L960.5,778.6 L961.5,781.2 L962.5,776.0 L963.5,780.1 L964.5,780.8 L965.5,780.1 L966.5,780.8 L967.5,778.6 L968.5,776.0 L969.5,778.6 L970.5,776.2 L971.5,776.4 L972.5,778.6 L973.5,781.2 L974.5,778.6 L975.5,778.6 L976.5,778.6 L977.5,778.6 L978.5,781.2 L979.5,778.6 L980.5,778.6 L981.5,778.6 L982.5,776.4 L983.5,781.0 L984.5,781.2 L985.5,781.0 L986.5,777.1 L987.5,778.6 L988.5,781.2 L989.5,780.8 L990.5,776.0 L991.5,781.0 L992.5,777.1 L993.5,780.8 L994.5,776.0 L995.5,778.6 L996.5,776.0 L997.5,781.0 L998.5,777.1 L999.5,780.8 L1000.5,776.0 L1001.5,776.0 L1002.5,777.1 L1003.5,780.8 L1004.5,781.2 L1005.5,780.1 L1006.5,776.4 L1007.5,776.4 L1008.5,777.1 L1009.5,780.1 L1010.5,778.6 L1011.5,777.1 L1012.5,776.2 L1013.5,781.2 L1014.5,776.0 L1015.5,778.6 L1016.5,780.8 L1017.5,780.1 L1018.5,780.1 L1019.5,781.2 L1020.5,777.1 L1021.5,776.4 L1022.5,776.0 L1023.5,776.4 L1024.5,778.6 L1025.5,776.4 L1026.5,780.1 L1027.5,780.8 L1028.5,776.4 L1029.5,776.2 L1030.5,778.6 L1031.5,780.8 L1032.5,780.1 L1033.5,778.6 L1034.5,780.8 L1035.5,776.4 L1036.5,776.0 L1037.5,781.2 L1038.5,778.6 L1039.5,780.1 L1040.5,776.2 L1041.5,781.2 L1042.5,778.6 L1043.5,780.1 L1044.5,780.1 L1045.5,781.2 L1046.5,776.0 L1047.5,780.8 L1048.5,778.6 L1049.5,780.8 L1050.5,776.0 L1051.5,780.8 L1052.5,776.0 L1053.5,781.2 L1054.5,776.4 L1055.5,776.0 L1056.5,778.6 L1057.5,778.6 L1058.5,776.4 L1059.5,781.0 L1060.5,780.1 L1061.5,780.1 L1062.5,778.6 L1063.5,780.1 L1064.5,781.0 L1065.5,776.0 L1066.5,778.6 L1067.5,780.1 L1068.5,778.6 L1069.5,778.6 L1070.5,776.0 L1071.5,781.0 L1072.5,776.4 L1073.5,776.0 L1074.5,778.6 L1075.5,776.4 L1076.5,781.2 L1077.5,781.2 L1078.5,780.8 L1079.5,778.6 L1080.5,780.8 L1081.5,781.2 L1082.5,777.1 L1083.5,781.2 L1084.5,777.1 L1085.5,776.0 L1086.5,778.6 L1087.5,777.1 L1088.5,781.0 L1089.5,778.6 L1090.5,780.1 L1091.5,780.1 L1092.5,781.2 L1093.5,780.1 L1094.5,781.0 L1095.5,776.4 L1096.5,776.2 L1097.5,778.6 L1098.5,780.8 L1099.5,777.1 L1100.5,778.6 L1101.5,780.8 L1102.5,776.4 L1103.5,776.0 L1104.5,781.2 L1105.5,776.2 L1106.5,776.2 L1107.5,780.1 L1108.5,777.1 L1109.5,780.8 L1110.5,776.4 L1111.5,776.4 L1112.5,778.6 L1113.5,781.0 L1114.5,776.4 L1115.5,778.6 L1116.5,776.4 L1117.5,780.8 L1118.5,781.2 L1119.5,781.2 L1120.5,777.1 L1121.5,778.6 L1122.5,777.1 L1123.5,780.8 L1124.5,781.2 L1125.5,781.0 L1126.5,778.6 L1127.5,776.2 L1128.5,776.4 L1129.5,778.6 L1130.5,778.6 L1131.5,778.6 L1132.5,781.0 L1133.5,778.6 L1134.5,780.1 L1135.5,778.6 L1136.5,778.6 L1137.5,778.6 L1138.5,781.2 L1139.5,778.6 L1140.5,777.1 L1141.5,778.6 L1142.5,778.6 L1143.5,777.1 L1144.5,778.6 L1145.5,781.0 L1146.5,778.6 L1147.5,780.1 L1148.5,776.4 L1149.5,780.8 L1150.5,778.6 L1151.5,778.6 L1152.5,776.2 L1153.5,776.2 L1154.5,778.6 L1155.5,776.4 L1156.5,781.2 L1157.5,776.0 L1158.5,776.4 L1159.5,776.0 L1160.5,781.2 L1161.5,778.6 L1162.5,781.2 L1163.5,780.1 L1164.5,776.0 L1165.5,778.6 L1166.5,778.6 L1167.5,776.4 L1168.5,776.0 L1169.5,778.6 L1170.5,781.0 L1171.5,781.0 L1172.5,778.6 L1173.5,776.4 L1174.5,780.1 L1175.5,776.2 L1176.5,777.1 L1177.5,781.2 L1178.5,781.0 L1179.5,778.6 L1180.5,776.0 L1181.5,776.4 L1182.5,781.0 L1183.5,781.0 L1184.5,780.1 L1185.5,778.6 L1186.5,776.0 L1187.5,780.1 L1188.5,780.1 L1189.5,777.1 L1190.5,776.0 L1191.5,778.6 L1192.5,778.6 L1193.5,776.0 L1194.5,781.0 L1195.5,778.6 L1196.5,776.0 L1197.5,780.1 L1198.5,780.8 L1199.5,780.1 L1200.5,777.1 L1201.5,781.0 L1202.5,778.6 L1203.5,776.4 L1204.5,778.6 L1205.5,776.0 L1206.5,781.2 L1207.5,776.2 L1208.5,781.2 L1209.5,776.4 L1210.5,780.8 L1211.5,776.4 L1212.5,780.8 L1213.5,776.2 L1214.5,777.1 L1215.5,776.2 L1216.5,776.4 L1217.5,777.1 L1218.5,780.8 L1219.5,778.6 L1220.5,780.8 L1221.5,778.6 L1222.5,778.6 L1223.5,780.8 L1224.5,776.0 L1225.5,778.6 L1226.5,781.0 L1227.5,780.1 L1228.5,780.8 L1229.5,780.8 L1230.5,776.0 L1231.5,780.1 L1232.5,778.6 L1233.5,780.8 L1234.5,780.8 L1235.5,778.6 L1236.5,776.0 L1237.5,780.8 L1238.5,777.1 L1239.5,780.8 L1240.5,776.4 L1241.5,776.4 L1242.5,780.8 L1243.5,781.0 L1244.5,780.1 L1245.5,781.2 L1246.5,777.1 L1247.5,777.1 L1248.5,776.0 L1249.5,776.0 L1250.5,776.2 L1251.5,777.1 L1252.5,780.8 L1253.5,776.4 L1254.5,781.0 L1255.5,781.0 L1256.5,780.1 L1257.5,776.2 L1258.5,777.1 L1259.5,777.1 L1260.5,780.1 L1261.5,778.6 L1262.5,777.1 L1263.5,776.2 L1264.5,777.1 L1265.5,776.4 L1266.5,776.4 L1267.5,780.8 L1268.5,781.2 L1269.5,778.6 L1270.5,778.6 L1271.5,777.1 L1272.5,776.0 L1273.5,781.2 L1274.5,780.1 L1275.5,776.0 L1276.5,781.0 L1277.5,780.8 L1278.5,776.4 L1279.5,781.0 L1280.5,777.1 L1281.5,778.6 L1282.5,781.0 L1283.5,780.8 L1284.5,781.0 L1285.5,778.6 L1286.5,781.2 L1287.5,777.1 L1288.5,781.0 L1289.5,778.6 L1290.5,776.0 L1291.5,780.8 L1292.5,776.2 L1293.5,777.1 L1294.5,780.8 L1295.5,780.1 L1296.5,776.4 L1297.5,777.1 L1298.5,778.6 L1299.5,778.6 L1300.5,776.0 L1301.5,776.2 L1302.5,776.0 L1303.5,780.1 L1304.5,776.4 L1305.5,780.8 L1306.5,781.0 L1307.5,781.2 L1308.5,776.2 L1309.5,778.6 L1310.5,780.8 L1311.5,778.6 L1312.5,781.0 L1313.5,778.6 L1314.5,780.8 L1315.5,780.8 L1316.5,780.1 L1317.5,781.2 L1318.5,776.2 L1319.5,781.2 L1320.5,777.1 L1321.5,776.0 L1322.5,776.0 L1323.5,781.0 L1324.5,781.2 L1325.5,781.2 L1326.5,778.6 L1327.5,781.2 L1328.5,781.0 L1329.5,781.2 L1330.5,777.1 L1331.5,781.2 L1332.5,780.8 L1333.5,776.4 L1334.5,776.4 L1335.5,777.1 L1336.5,780.1 L1337.5,780.8 L1338.5,780.1 L1339.5,776.4 L1340.5,781.2 L1341.5,776.2 L1342.5,776.2 L1343.5,776.0 L1344.5,776.0 L1345.5,777.1 L1346.5,776.4 L1347.5,780.1 L1348.5,776.2 L1349.5,776.4 L1350.5,776.0 L1351.5,776.2 L1352.5,780.8 L1353.5,777.1 L1354.5,776.0 L1355.5,776.4 L1356.5,781.0 L1357.5,776.4 L1358.5,778.6 L1359.5,777.1 L1360.5,781.2 L1361.5,778.6 L1362.5,777.1 L1363.5,778.6 L1364.5,776.4 L1365.5,780.1 L1366.5,781.0 L1367.5,778.6 L1368.5,777.1 L1369.5,780.1 L1370.5,781.0 L1371.5,778.6 L1372.5,781.2 L1373.5,777.1 L1374.5,778.6 L1375.5,776.2 L1376.5,781.2 L1377.5,778.6 L1378.5,781.0 L1379.5,778.6 L1380.5,781.0 L1381.5,776.2 L1382.5,778.6 L1383.5,780.1 L1384.5,780.1 L1385.5,776.0 L1386.5,778.6 L1387.5,777.1 L1388.5,780.8 L1389.5,777.1 L1390.5,778.6 L1391.5,780.1 L1392.5,780.8 L1393.5,777.1 L1394.5,778.6 L1395.5,776.4 L1396.5,776.2 L1397.5,776.0 L1398.5,780.1 L1399.5,781.2 L1400.5,776.2 L1401.5,776.2 L1402.5,781.0 L1403.5,776.4 L1404.5,778.6 L1405.5,776.2 L1406.5,780.8 L1407.5,780.1 L1408.5,778.6 L1409.5,780.8 L1410.5,780.1 L1411.5,781.0 L1412.5,777.1 L1413.5,780.1 L1414.5,780.1 L1415.5,776.4 L1416.5,781.2 L1417.5,778.6 L1418.5,777.1 L1419.5,781.0 L1420.5,776.0 L1421.5,778.6 L1422.5,776.2 L1423.5,778.6 L1424.5,778.6 L1425.5,781.0 L1426.5,780.1 L1427.5,776.0 L1428.5,776.0 L1429.5,778.6 L1430.5,777.1 L1431.5,778.6 L1432.5,781.0 L1433.5,780.8 L1434.5,780.8 L1435.5,776.2 L1436.5,780.1 L1437.5,776.0 L1438.5,777.1 L1439.5,781.2 L1440.5,778.6 L1441.5,781.0 L1442.5,776.0 L1443.5,776.0 L1444.5,776.0 L1445.5,776.0 L1446.5,781.0 L1447.5,780.1 L1448.5,778.6 L1449.5,776.4 L1450.5,776.2 L1451.5,780.1 L1452.5,776.2 L1453.5,778.6 L1454.5,780.8 L1455.5,781.0 L1456.5,778.6 L1457.5,781.0 L1458.5,777.1 L1459.5,778.6 L1460.5,780.1 L1461.5,781.0 L1462.5,781.2 L1463.5,777.1 L1464.5,777.1 L1465.5,776.0 L1466.5,778.6 L1467.5,777.1 L1468.5,781.2 L1469.5,776.4 L1470.5,776.4 L1471.5,777.1 L1472.5,778.6 L1473.5,780.8 L1474.5,778.6 L1475.5,776.0 L1476.5,776.0 L1477.5,776.2 L1478.5,780.1 L1479.5,781.0 L1480.5,781.0 L1481.5,781.2 L1482.5,781.0 L1483.5,776.2 L1484.5,781.2 L1485.5,778.6 L1486.5,777.1 L1487.5,776.0 L1488.5,776.0 L1489.5,776.0 L1490.5,776.2 L1491.5,776.0 L1492.5,780.8 L1493.5,777.1 L1494.5,778.6 L1495.5,777.1 L1496.5,776.0 L1497.5,776.4 L1498.5,776.0 L1499.5,781.0 L1500.5,776.2 L1501.5,778.6 L1502.5,777.1 L1503.5,780.8 L1504.5,778.6 L1505.5,776.2 L1506.5,781.0 L1507.5,776.2 L1508.5,780.8 L1509.5,781.0 L1510.5,777.1 L1511.5,776.2 L1512.5,778.6 L1513.5,776.4 L1514.5,778.6 L1515.5,776.0 L1516.5,781.2 L1517.5,776.2 L1518.5,776.0 L1519.5,780.8 L1520.5,780.8 L1521.5,781.2 L1522.5,776.4 L1523.5,781.2 L1524.5,777.1 L1525.5,778.6 L1526.5,776.4 L1527.5,778.6 L1528.5,778.6 L1529.5,776.0 L1530.5,776.4 L1531.5,780.1 L1532.5,778.6 L1533.5,776.0 L1534.5,778.6 L1535.5,776.2 L1536.5,780.8 L1537.5,776.2 L1538.5,778.6 L1539.5,778.6 L1540.5,778.6 L1541.5,776.4 L1542.5,776.2 L1543.5,776.0 L1544.5,777.1 L1545.5,778.6 L1546.5,778.6 L1547.5,778.6 L1548.5,777.1 L1549.5,780.1 L1550.5,778.6 L1551.5,780.8 L1552.5,780.1 L1553.5,781.0 L1554.5,778.6 L1555.5,780.8 L1556.5,776.2 L1557.5,781.2 L1558.5,781.2 L1559.5,776.2 L1560.5,776.0 L1561.5,776.0 L1562.5,780.8 L1563.5,778.6 L1564.5,781.0 L1565.5,778.6 L1566.5,778.6 L1567.5,780.8 L1568.5,781.0 L1569.5,781.0 L1570.5,776.4 L1571.5,781.0 L1572.5,777.1 L1573.5,777.1 L1574.5,776.0 L1575.5,776.0 L1576.5,776.4 L1577.5,776.4 L1578.5,781.0 L1579.5,777.1 L1580.5,780.1 L1581.5,777.1 L1582.5,776.0 L1583.5,776.0 L1584.5,776.0 L1585.5,777.1 L1586.5,776.0 L1587.5,776.4 L1588.5,776.0 L1589.5,776.4 L1590.5,781.0 L1591.5,780.1 L1592.5,778.6 L1593.5,776.2 L1594.5,776.4 L1595.5,780.8 L1596.5,776.4 L1597.5,778.6 L1598.5,778.6 L1599.5,778.6 L1600.5,776.4 L1601.5,776.0 L1602.5,776.0 L1603.5,776.4 L1604.5,778.6 L1605.5,781.2 L1606.5,776.4 L1607.5,777.1 L1608.5,776.4 L1609.5,778.6 L1610.5,778.6 L1611.5,780.1 L1612.5,780.1 L1613.5,780.8 L1614.5,778.6 L1615.5,776.0 L1616.5,780.1 L1617.5,778.6 L1618.5,778.6 L1619.5,776.0 L1620.5,780.1 L1621.5,780.1 L1622.5,781.0 L1623.5,776.2 L1624.5,781.2 L1625.5,778.6 L1626.5,781.0 L1627.5,776.0 L1628.5,780.8 L1629.5,776.0 L1630.5,780.8 L1631.5,776.2 L1632.5,776.4 L1633.5,780.1 L1634.5,781.2 L1635.5,776.0 L1636.5,776.2 L1637.5,781.0 L1638.5,778.6 L1639.5,776.4 L1640.5,781.0 L1641.5,778.6 L1642.5,777.1 L1643.5,780.8 L1644.5,776.0 L1645.5,776.2 L1646.5,778.6 L1647.5,778.6 L1648.5,776.0 L1649.5,776.0 L1650.5,780.1 L1651.5,781.2 L1652.5,776.4 L1653.5,781.2 L1654.5,777.1 L1655.5,781.2 L1656.5,781.0 L1657.5,780.1 L1658.5,776.2 L1659.5,778.6 L1660.5,781.0 L1661.5,777.1 L1662.5,778.6 L1663.5,778.6 L1664.5,778.6 L1665.5,781.2 L1666.5,777.1 L1667.5,776.4" fill="none" stroke="#3366ff" stroke-width="1.3" opacity="0.85"/><path d="M279.8,779.6 L279.8,739.5 L280.6,740.5 L293.4,773.6" fill="none" stroke="#3366ff" stroke-width="3.5" stroke-linejoin="bevel"/><rect x="294.3" y="613" width="3.4" height="166.6" fill="#3366ff"/><path d="M297.4,700.4 L298.2,708.1 L299.0,714.9 L299.8,721.8 L300.6,727.1 L301.4,731.8 L302.2,736.6 L303.0,740.6 L303.8,745.2 L304.6,748.5 L305.4,751.4 L306.2,753.8 L307.0,756.5 L307.8,758.5 L308.6,760.4 L309.4,762.3 L310.2,764.1 L311.0,765.1 L311.8,767.3 L312.6,768.1 L313.4,769.5 L314.2,769.6 L315.0,770.9 L315.8,771.8 L316.6,772.4 L317.4,772.5 L318.2,773.6 L319.0,774.0 L319.8,774.8 L320.6,774.8 L321.4,775.3 L322.2,775.4 L323.0,775.9 L323.8,776.4 L324.6,776.2 L325.4,776.4 L326.2,776.7 L327.0,777.1 L327.8,777.4 L328.6,777.3 L329.4,777.2 L330.2,777.8 L331.0,778.0 L331.8,777.9 L332.6,778.1 L333.4,778.4 L334.2,778.2 L335.0,778.1" fill="none" stroke="#3366ff" stroke-width="3.4" stroke-linejoin="round"/><path d="M1420.0,779.6 L1420.0,747.0 L1420.8,748.0 L1433.6000000000001,773.6" fill="none" stroke="#3366ff" stroke-width="3.5" stroke-linejoin="bevel"/><rect x="1434.2" y="592" width="4.0" height="187.6" fill="#3366ff"/><path d="M1437.9,689.8 L1438.7,698.6 L1439.5,707.3 L1440.3,713.8 L1441.1,720.9 L1441.9,726.8 L1442.7,731.2 L1443.5,736.4 L1444.3,740.1 L1445.1,743.9 L1445.9,747.3 L1446.7,750.6 L1447.5,753.3 L1448.3,755.8 L1449.1,757.9 L1449.9,760.7 L1450.7,761.9 L1451.5,764.2 L1452.3,765.2 L1453.1,766.1 L1453.9,768.2 L1454.7,768.8 L1455.5,769.6 L1456.3,771.2 L1457.1,771.3 L1457.9,771.7 L1458.7,772.6 L1459.5,773.7 L1460.3,773.5 L1461.1,774.2 L1461.9,775.2 L1462.7,775.4 L1463.5,775.6 L1464.3,776.0 L1465.1,776.5 L1465.9,776.5 L1466.7,776.7 L1467.5,777.2 L1468.3,777.1 L1469.1,777.2 L1469.9,777.0 L1470.7,777.1 L1471.5,777.2 L1472.3,777.6 L1473.1,777.5 L1473.9,778.0 L1474.7,778.3 L1475.5,777.7" fill="none" stroke="#3366ff" stroke-width="3.4" stroke-linejoin="round"/>
<path d="M68.0,218.8 L68.9,230.2 L69.8,241.6 L70.6,252.8 L71.5,263.5 L72.3,273.6 L73.2,282.7 L74.0,290.8 L74.9,297.7 L75.7,303.2 L76.6,307.2 L77.4,309.6 L78.3,310.4 L79.2,310.0 L80.0,308.7 L80.9,306.6 L81.8,303.8 L82.6,300.2 L83.5,296.0 L84.3,291.1 L85.2,285.8 L86.1,280.0 L86.9,273.9 L87.8,267.5 L88.7,261.1 L89.5,254.7 L90.4,248.3 L91.2,242.2 L92.1,236.5 L93.0,231.1 L93.8,226.2 L94.7,222.0 L95.5,218.4 L96.4,215.6 L97.3,213.5 L98.1,212.2 L99.0,211.8 L99.8,212.4 L100.7,214.1 L101.5,216.9 L102.4,220.7 L103.2,225.6 L104.1,231.3 L104.9,237.8 L105.8,245.0 L106.6,252.6 L107.5,260.7 L108.3,269.0 L109.2,277.4 L110.0,285.7 L110.9,293.8 L111.7,301.4 L112.6,308.6 L113.4,315.1 L114.3,320.8 L115.1,325.7 L116.0,329.5 L116.8,332.3 L117.7,334.0 L118.5,334.6 L119.3,334.1 L120.2,332.6 L121.0,330.2 L121.9,326.8 L122.7,322.6 L123.6,317.7 L124.4,312.0 L125.3,305.8 L126.1,299.1 L127.0,292.1 L127.8,284.9 L128.7,277.7 L129.5,270.5 L130.4,263.5 L131.2,256.8 L132.1,250.6 L132.9,244.9 L133.8,240.0 L134.6,235.8 L135.5,232.4 L136.3,230.0 L137.2,228.5 L138.0,228.0 L138.8,228.5 L139.7,230.2 L140.5,232.9 L141.3,236.7 L142.2,241.4 L143.0,247.1 L143.8,253.7 L144.7,261.0 L145.5,269.1 L146.3,277.8 L147.2,287.0 L148.0,296.6 L148.8,306.5 L149.7,316.6 L150.5,326.7 L151.4,336.8 L152.2,346.7 L153.0,356.3 L153.9,365.5 L154.7,374.2 L155.5,382.3 L156.4,389.6 L157.2,396.2 L158.0,401.9 L158.9,406.6 L159.7,410.4 L160.5,413.1 L161.4,414.8 L162.2,415.3 L163.0,414.7 L163.9,413.1 L164.8,410.4 L165.6,406.7 L166.4,402.0 L167.3,396.5 L168.2,390.3 L169.0,383.5 L169.8,376.2 L170.7,368.6 L171.6,360.9 L172.4,353.2 L173.2,345.6 L174.1,338.3 L174.9,331.5 L175.8,325.3 L176.7,319.8 L177.5,315.1 L178.3,311.4 L179.2,308.7 L180.1,307.1 L180.9,306.5 L181.7,306.9 L182.6,308.2 L183.4,310.2 L184.3,313.0 L185.1,316.5 L186.0,320.7 L186.8,325.4 L187.7,330.6 L188.5,336.2 L189.4,342.1 L190.2,348.1 L191.1,354.2 L191.9,360.2 L192.8,366.1 L193.6,371.7 L194.5,376.9 L195.3,381.6 L196.2,385.8 L197.0,389.3 L197.9,392.1 L198.7,394.1 L199.6,395.4 L200.4,395.8 L201.2,395.4 L202.1,394.1 L202.9,392.1 L203.8,389.3 L204.6,385.8 L205.5,381.6 L206.3,376.9 L207.2,371.7 L208.0,366.1 L208.9,360.2 L209.7,354.2 L210.6,348.1 L211.4,342.1 L212.3,336.2 L213.1,330.6 L214.0,325.4 L214.8,320.7 L215.7,316.5 L216.5,313.0 L217.4,310.2 L218.2,308.2 L219.1,306.9 L219.9,306.5 L220.7,306.9 L221.6,308.1 L222.4,310.1 L223.2,312.8 L224.1,316.2 L224.9,320.3 L225.8,325.1 L226.6,330.4 L227.4,336.2 L228.3,342.4 L229.1,349.0 L229.9,355.8 L230.8,362.8 L231.6,369.9 L232.4,377.0 L233.3,384.0 L234.1,390.8 L234.9,397.4 L235.8,403.6 L236.6,409.4 L237.5,414.7 L238.3,419.5 L239.1,423.6 L240.0,427.0 L240.8,429.7 L241.6,431.7 L242.5,432.9 L243.3,433.3 L244.2,432.9 L245.0,431.5 L245.9,429.4 L246.7,426.4 L247.6,422.6 L248.5,418.1 L249.3,412.9 L250.2,407.2 L251.0,401.1 L251.9,394.5 L252.8,387.7 L253.6,380.7 L254.5,373.6 L255.3,366.6 L256.2,359.8 L257.1,353.2 L257.9,347.1 L258.8,341.4 L259.6,336.2 L260.5,331.7 L261.4,327.9 L262.2,324.9 L263.1,322.8 L263.9,321.4 L264.8,321.0 L265.7,321.4 L266.5,322.4 L267.4,324.2 L268.2,326.6 L269.1,329.6 L269.9,333.1 L270.8,337.0 L271.7,341.1 L272.5,345.5 L273.4,349.9 L274.2,354.3 L275.1,358.4 L276.0,362.3 L276.8,365.8 L277.7,368.8 L278.5,371.2 L279.4,373.0 L280.2,374.0 L281.1,374.4 L282.0,374.1 L282.8,373.3 L283.7,371.8 L284.5,369.9 L285.4,367.4 L286.2,364.4 L287.1,361.0 L287.9,357.2 L288.8,353.0 L289.6,348.6 L290.4,343.8 L291.3,338.9 L292.1,333.9 L293.0,328.8 L293.9,323.6 L294.7,318.6 L295.6,313.7 L296.4,308.9 L297.2,304.5 L298.1,300.3 L298.9,296.5 L299.8,293.1 L300.6,290.1 L301.5,287.6 L302.3,285.7 L303.2,284.2 L304.0,283.4 L304.9,283.1 L305.7,283.4 L306.6,284.4 L307.4,286.0 L308.3,288.1 L309.1,290.9 L309.9,294.0 L310.8,297.6 L311.6,301.5 L312.4,305.7 L313.3,310.0 L314.1,314.3 L315.0,318.6 L315.8,322.8 L316.6,326.7 L317.5,330.3 L318.3,333.4 L319.1,336.2 L320.0,338.3 L320.8,339.9 L321.7,340.9 L322.5,341.2 L323.3,340.7 L324.2,339.3 L325.0,336.8 L325.9,333.5 L326.7,329.3 L327.6,324.2 L328.4,318.3 L329.2,311.7 L330.1,304.4 L330.9,296.5 L331.8,288.1 L332.6,279.2 L333.4,270.0 L334.3,260.6 L335.1,251.1 L336.0,241.4 L336.8,231.9 L337.7,222.5 L338.5,213.3 L339.3,204.4 L340.2,196.0 L341.0,188.1 L341.9,180.8 L342.7,174.2 L343.5,168.3 L344.4,163.2 L345.2,159.0 L346.1,155.7 L346.9,153.2 L347.8,151.8 L348.6,151.3 L349.4,152.0 L350.3,154.1 L351.1,157.6 L351.9,162.4 L352.8,168.4 L353.6,175.5 L354.5,183.5 L355.3,192.3 L356.1,201.7 L357.0,211.5 L357.8,221.5 L358.6,231.5 L359.5,241.3 L360.3,250.7 L361.1,259.5 L362.0,267.5 L362.8,274.6 L363.7,280.6 L364.5,285.4 L365.3,288.9 L366.2,291.0 L367.0,291.7 L367.8,291.3 L368.7,290.2 L369.5,288.4 L370.3,285.9 L371.2,282.9 L372.0,279.2 L372.8,275.1 L373.7,270.7 L374.5,265.9 L375.3,261.0 L376.2,256.1 L377.0,251.2 L377.8,246.4 L378.7,242.0 L379.5,237.9 L380.3,234.2 L381.2,231.2 L382.0,228.7 L382.8,226.9 L383.7,225.8 L384.5,225.4 L385.3,225.8 L386.2,226.9 L387.0,228.7 L387.8,231.2 L388.7,234.4 L389.5,238.2 L390.4,242.5 L391.2,247.4 L392.0,252.7 L392.9,258.4 L393.7,264.3 L394.5,270.5 L395.4,276.8 L396.2,283.2 L397.1,289.5 L397.9,295.7 L398.7,301.6 L399.6,307.3 L400.4,312.6 L401.2,317.5 L402.1,321.8 L402.9,325.6 L403.8,328.8 L404.6,331.3 L405.4,333.1 L406.3,334.2 L407.1,334.6 L407.9,333.9 L408.8,332.0 L409.6,328.7 L410.5,324.3 L411.3,318.7 L412.1,312.2 L413.0,304.9 L413.8,296.9 L414.6,288.4 L415.5,279.6 L416.3,270.7 L417.2,261.9 L418.0,253.4 L418.8,245.4 L419.7,238.1 L420.5,231.6 L421.3,226.0 L422.2,221.6 L423.0,218.3 L423.9,216.4 L424.7,215.7 L425.5,216.1 L426.4,217.2 L427.2,219.0 L428.0,221.5 L428.9,224.8 L429.7,228.7 L430.5,233.2 L431.4,238.3 L432.2,244.0 L433.0,250.2 L433.9,256.9 L434.7,263.9 L435.5,271.3 L436.4,279.0 L437.2,287.0 L438.0,295.0 L438.9,303.2 L439.7,311.5 L440.6,319.7 L441.4,327.7 L442.2,335.7 L443.1,343.4 L443.9,350.8 L444.7,357.8 L445.6,364.5 L446.4,370.7 L447.2,376.4 L448.1,381.5 L448.9,386.0 L449.7,389.9 L450.6,393.2 L451.4,395.7 L452.2,397.5 L453.1,398.6 L453.9,399.0 L454.8,398.4 L455.6,396.8 L456.5,394.1 L457.4,390.4 L458.3,385.9 L459.1,380.7 L460.0,374.9 L460.9,368.7 L461.8,362.3 L462.6,355.9 L463.5,349.7 L464.4,344.0 L465.2,338.7 L466.1,334.2 L467.0,330.5 L467.9,327.8 L468.7,326.2 L469.6,325.6 L470.5,326.1 L471.4,327.8 L472.2,330.4 L473.1,334.0 L474.0,338.4 L474.9,343.4 L475.7,349.1 L476.6,355.1 L477.5,361.3 L478.4,367.5 L479.3,373.5 L480.1,379.1 L481.0,384.2 L481.9,388.6 L482.8,392.2 L483.6,394.8 L484.5,396.5 L485.4,397.0 L486.3,396.7 L487.1,395.8 L488.0,394.4 L488.8,392.4 L489.7,389.9 L490.6,386.9 L491.4,383.4 L492.3,379.5 L493.1,375.3 L494.0,370.7 L494.9,365.9 L495.7,360.9 L496.6,355.8 L497.4,350.6 L498.3,345.4 L499.2,340.3 L500.0,335.3 L500.9,330.5 L501.8,325.9 L502.6,321.7 L503.5,317.8 L504.3,314.3 L505.2,311.3 L506.1,308.8 L506.9,306.8 L507.8,305.4 L508.6,304.5 L509.5,304.2 L510.3,304.6 L511.2,305.8 L512.0,307.7 L512.9,310.4 L513.7,313.8 L514.5,317.8 L515.4,322.4 L516.2,327.6 L517.1,333.2 L517.9,339.3 L518.7,345.6 L519.6,352.2 L520.4,358.9 L521.3,365.7 L522.1,372.4 L523.0,379.0 L523.8,385.3 L524.6,391.3 L525.5,397.0 L526.3,402.2 L527.2,406.8 L528.0,410.8 L528.8,414.2 L529.7,416.9 L530.5,418.8 L531.4,420.0 L532.2,420.4 L533.1,420.0 L533.9,418.8 L534.8,416.9 L535.7,414.2 L536.6,410.9 L537.4,407.0 L538.3,402.6 L539.2,397.9 L540.0,392.8 L540.9,387.6 L541.8,382.2 L542.7,377.0 L543.5,371.9 L544.4,367.1 L545.3,362.8 L546.1,358.9 L547.0,355.6 L547.9,352.9 L548.8,351.0 L549.6,349.8 L550.5,349.4 L551.3,349.6 L552.2,350.3 L553.0,351.5 L553.9,353.1 L554.7,355.0 L555.6,357.3 L556.4,359.8 L557.2,362.5 L558.1,365.3 L558.9,368.2 L559.8,371.0 L560.6,373.7 L561.4,376.2 L562.3,378.5 L563.1,380.4 L564.0,382.0 L564.8,383.2 L565.7,383.9 L566.5,384.1 L567.4,383.8 L568.2,383.1 L569.1,381.8 L569.9,380.0 L570.8,377.7 L571.6,375.0 L572.5,371.8 L573.3,368.3 L574.2,364.3 L575.0,360.0 L575.9,355.5 L576.7,350.6 L577.6,345.5 L578.4,340.3 L579.3,335.0 L580.1,329.5 L581.0,324.1 L581.8,318.6 L582.7,313.3 L583.5,308.1 L584.4,303.0 L585.2,298.2 L586.1,293.6 L586.9,289.3 L587.8,285.3 L588.6,281.8 L589.5,278.6 L590.3,275.9 L591.2,273.6 L592.0,271.8 L592.9,270.5 L593.7,269.8 L594.6,269.5 L595.5,269.8 L596.3,270.8 L597.2,272.3 L598.1,274.5 L598.9,277.1 L599.8,280.1 L600.7,283.5 L601.5,287.1 L602.4,290.8 L603.3,294.4 L604.1,298.0 L605.0,301.4 L605.9,304.4 L606.7,307.0 L607.6,309.2 L608.5,310.7 L609.3,311.7 L610.2,312.0 L611.0,311.5 L611.9,310.1 L612.7,307.7 L613.6,304.4 L614.4,300.3 L615.2,295.4 L616.1,289.7 L616.9,283.4 L617.7,276.6 L618.6,269.3 L619.4,261.7 L620.3,253.9 L621.1,245.9 L621.9,237.9 L622.8,230.1 L623.6,222.5 L624.5,215.2 L625.3,208.4 L626.1,202.1 L627.0,196.4 L627.8,191.5 L628.6,187.4 L629.5,184.1 L630.3,181.7 L631.2,180.3 L632.0,179.8 L632.8,180.3 L633.7,181.8 L634.5,184.4 L635.4,187.8 L636.2,192.2 L637.0,197.5 L637.9,203.4 L638.7,210.1 L639.5,217.4 L640.4,225.1 L641.2,233.2 L642.1,241.5 L642.9,250.0 L643.7,258.5 L644.6,266.8 L645.4,274.9 L646.3,282.6 L647.1,289.9 L647.9,296.6 L648.8,302.5 L649.6,307.8 L650.4,312.2 L651.3,315.6 L652.1,318.2 L653.0,319.7 L653.8,320.2 L654.6,319.7 L655.5,318.3 L656.3,316.0 L657.2,312.9 L658.0,308.9 L658.9,304.1 L659.7,298.8 L660.6,292.8 L661.4,286.4 L662.3,279.6 L663.1,272.6 L664.0,265.4 L664.8,258.2 L665.6,251.2 L666.5,244.4 L667.3,238.0 L668.2,232.0 L669.0,226.7 L669.9,221.9 L670.7,217.9 L671.6,214.8 L672.4,212.5 L673.3,211.1 L674.1,210.6 L675.0,211.2 L675.8,213.0 L676.7,215.9 L677.6,220.0 L678.4,225.1 L679.3,231.1 L680.2,237.9 L681.0,245.5 L681.9,253.5 L682.8,262.0 L683.6,270.7 L684.5,279.6 L685.3,288.3 L686.2,296.8 L687.1,304.8 L687.9,312.4 L688.8,319.2 L689.7,325.2 L690.5,330.3 L691.4,334.4 L692.3,337.3 L693.1,339.1 L694.0,339.7 L694.8,339.2 L695.7,337.8 L696.5,335.6 L697.4,332.4 L698.2,328.5 L699.1,323.8 L699.9,318.6 L700.8,312.7 L701.6,306.5 L702.5,299.9 L703.3,293.2 L704.2,286.3 L705.0,279.6 L705.9,273.0 L706.7,266.8 L707.6,260.9 L708.4,255.7 L709.3,251.0 L710.1,247.1 L711.0,243.9 L711.8,241.7 L712.7,240.3 L713.5,239.8 L714.3,240.3 L715.2,241.8 L716.0,244.4 L716.8,247.9 L717.7,252.3 L718.5,257.6 L719.3,263.7 L720.2,270.6 L721.0,278.2 L721.8,286.3 L722.7,294.8 L723.5,303.8 L724.3,313.1 L725.2,322.5 L726.0,331.9 L726.9,341.3 L727.7,350.6 L728.5,359.6 L729.4,368.1 L730.2,376.2 L731.0,383.8 L731.9,390.7 L732.7,396.8 L733.5,402.1 L734.4,406.5 L735.2,410.0 L736.0,412.6 L736.9,414.1 L737.7,414.6 L738.6,414.0 L739.4,412.2 L740.3,409.3 L741.1,405.3 L742.0,400.4 L742.8,394.6 L743.7,388.0 L744.5,380.8 L745.4,373.2 L746.2,365.3 L747.1,357.4 L747.9,349.5 L748.8,341.9 L749.6,334.7 L750.5,328.1 L751.3,322.3 L752.2,317.4 L753.0,313.4 L753.9,310.5 L754.7,308.7 L755.6,308.1 L756.4,308.5 L757.3,309.7 L758.1,311.6 L759.0,314.2 L759.8,317.6 L760.7,321.6 L761.5,326.1 L762.4,331.2 L763.2,336.6 L764.0,342.4 L764.9,348.5 L765.7,354.7 L766.6,360.9 L767.4,367.1 L768.3,373.2 L769.1,379.0 L769.9,384.4 L770.8,389.5 L771.6,394.0 L772.5,398.0 L773.3,401.4 L774.2,404.0 L775.0,405.9 L775.9,407.1 L776.7,407.5 L777.6,407.0 L778.4,405.3 L779.3,402.7 L780.1,399.0 L781.0,394.5 L781.8,389.1 L782.7,383.1 L783.5,376.6 L784.4,369.6 L785.2,362.4 L786.1,355.1 L786.9,347.9 L787.8,340.9 L788.6,334.4 L789.5,328.4 L790.3,323.0 L791.2,318.5 L792.0,314.8 L792.9,312.2 L793.7,310.5 L794.6,310.0 L795.4,310.4 L796.3,311.6 L797.1,313.6 L797.9,316.3 L798.8,319.8 L799.6,324.0 L800.5,328.7 L801.3,334.1 L802.1,339.9 L803.0,346.2 L803.8,352.9 L804.6,359.8 L805.5,366.8 L806.3,374.0 L807.1,381.2 L808.0,388.2 L808.8,395.1 L809.6,401.8 L810.5,408.1 L811.3,413.9 L812.1,419.3 L813.0,424.0 L813.8,428.2 L814.7,431.7 L815.5,434.4 L816.3,436.4 L817.2,437.6 L818.0,438.0 L818.9,437.6 L819.7,436.3 L820.6,434.2 L821.4,431.4 L822.3,427.8 L823.2,423.5 L824.0,418.5 L824.9,413.1 L825.7,407.2 L826.6,400.9 L827.5,394.4 L828.3,387.7 L829.2,381.0 L830.0,374.3 L830.9,367.8 L831.8,361.5 L832.6,355.6 L833.5,350.2 L834.3,345.2 L835.2,340.9 L836.1,337.3 L836.9,334.5 L837.8,332.4 L838.6,331.1 L839.5,330.7 L840.4,331.0 L841.2,331.9 L842.1,333.4 L843.0,335.4 L843.8,337.9 L844.7,340.9 L845.5,344.1 L846.4,347.6 L847.3,351.3 L848.1,355.0 L849.0,358.7 L849.9,362.2 L850.7,365.4 L851.6,368.4 L852.4,370.9 L853.3,372.9 L854.2,374.4 L855.0,375.3 L855.9,375.6 L856.7,375.3 L857.6,374.5 L858.4,373.1 L859.3,371.1 L860.1,368.7 L860.9,365.8 L861.8,362.4 L862.6,358.6 L863.5,354.5 L864.3,350.1 L865.1,345.4 L866.0,340.6 L866.8,335.6 L867.6,330.6 L868.5,325.5 L869.3,320.5 L870.2,315.7 L871.0,311.0 L871.8,306.6 L872.7,302.5 L873.5,298.7 L874.4,295.3 L875.2,292.4 L876.0,290.0 L876.9,288.0 L877.7,286.6 L878.6,285.8 L879.4,285.5 L880.2,285.8 L881.1,286.7 L881.9,288.2 L882.8,290.2 L883.6,292.7 L884.4,295.7 L885.3,299.1 L886.1,302.7 L886.9,306.6 L887.8,310.6 L888.6,314.6 L889.5,318.6 L890.3,322.5 L891.1,326.1 L892.0,329.5 L892.8,332.5 L893.6,335.0 L894.5,337.0 L895.3,338.5 L896.2,339.4 L897.0,339.7 L897.8,339.1 L898.7,337.2 L899.5,334.2 L900.4,330.0 L901.2,324.8 L902.1,318.5 L902.9,311.3 L903.7,303.2 L904.6,294.5 L905.4,285.2 L906.3,275.5 L907.1,265.4 L908.0,255.2 L908.8,245.1 L909.6,235.0 L910.5,225.3 L911.3,216.0 L912.2,207.3 L913.0,199.2 L913.8,192.0 L914.7,185.7 L915.5,180.5 L916.4,176.3 L917.2,173.3 L918.1,171.4 L918.9,170.8 L919.7,171.4 L920.6,173.2 L921.4,176.1 L922.3,180.2 L923.1,185.2 L924.0,191.3 L924.8,198.2 L925.7,205.9 L926.5,214.2 L927.3,223.1 L928.2,232.3 L929.0,241.7 L929.9,251.2 L930.7,260.6 L931.6,269.8 L932.4,278.7 L933.2,287.0 L934.1,294.7 L934.9,301.6 L935.8,307.7 L936.6,312.7 L937.5,316.8 L938.3,319.7 L939.2,321.5 L940.0,322.1 L940.9,321.5 L941.7,319.8 L942.5,316.9 L943.4,313.0 L944.2,308.2 L945.1,302.4 L946.0,295.9 L946.8,288.7 L947.6,281.1 L948.5,273.1 L949.4,265.0 L950.2,256.9 L951.1,248.9 L951.9,241.3 L952.8,234.1 L953.6,227.6 L954.5,221.8 L955.3,217.0 L956.2,213.1 L957.0,210.2 L957.9,208.5 L958.7,207.9 L959.5,208.4 L960.4,210.0 L961.2,212.7 L962.1,216.3 L962.9,220.8 L963.7,226.2 L964.6,232.4 L965.4,239.3 L966.3,246.7 L967.1,254.6 L967.9,262.9 L968.8,271.3 L969.6,279.8 L970.5,288.2 L971.3,296.5 L972.1,304.4 L973.0,311.8 L973.8,318.7 L974.7,324.9 L975.5,330.3 L976.3,334.8 L977.2,338.4 L978.0,341.1 L978.9,342.7 L979.7,343.2 L980.6,342.6 L981.4,340.8 L982.3,337.9 L983.1,334.0 L984.0,329.0 L984.8,323.2 L985.7,316.7 L986.6,309.5 L987.4,302.0 L988.3,294.1 L989.1,286.2 L990.0,278.3 L990.8,270.8 L991.7,263.6 L992.6,257.1 L993.4,251.3 L994.3,246.3 L995.1,242.4 L996.0,239.5 L996.8,237.7 L997.7,237.1 L998.5,237.6 L999.4,239.0 L1000.2,241.4 L1001.1,244.7 L1001.9,248.8 L1002.8,253.8 L1003.6,259.5 L1004.4,266.0 L1005.3,273.1 L1006.1,280.8 L1007.0,288.9 L1007.8,297.5 L1008.7,306.3 L1009.5,315.3 L1010.4,324.4 L1011.2,333.6 L1012.0,342.6 L1012.9,351.4 L1013.7,360.0 L1014.6,368.1 L1015.4,375.8 L1016.3,382.9 L1017.1,389.4 L1017.9,395.1 L1018.8,400.1 L1019.6,404.2 L1020.5,407.5 L1021.3,409.9 L1022.2,411.3 L1023.0,411.8 L1023.9,411.1 L1024.7,409.0 L1025.6,405.6 L1026.5,401.0 L1027.3,395.3 L1028.2,388.6 L1029.0,381.1 L1029.9,373.1 L1030.8,364.8 L1031.6,356.3 L1032.5,348.0 L1033.4,340.0 L1034.2,332.5 L1035.1,325.8 L1035.9,320.1 L1036.8,315.5 L1037.7,312.1 L1038.5,310.0 L1039.4,309.3 L1040.3,309.7 L1041.1,310.9 L1042.0,312.8 L1042.8,315.4 L1043.7,318.8 L1044.6,322.8 L1045.4,327.3 L1046.3,332.4 L1047.1,337.8 L1048.0,343.6 L1048.9,349.7 L1049.7,355.9 L1050.6,362.1 L1051.4,368.3 L1052.3,374.4 L1053.2,380.2 L1054.0,385.6 L1054.9,390.7 L1055.7,395.2 L1056.6,399.2 L1057.5,402.6 L1058.3,405.2 L1059.2,407.1 L1060.0,408.3 L1060.9,408.7 L1061.7,408.2 L1062.6,406.9 L1063.4,404.6 L1064.3,401.5 L1065.1,397.6 L1066.0,392.9 L1066.8,387.7 L1067.7,381.9 L1068.5,375.6 L1069.4,369.1 L1070.2,362.4 L1071.1,355.6 L1071.9,348.9 L1072.8,342.4 L1073.6,336.1 L1074.5,330.3 L1075.3,325.1 L1076.2,320.4 L1077.0,316.5 L1077.9,313.4 L1078.7,311.1 L1079.6,309.8 L1080.4,309.3 L1081.3,309.7 L1082.1,311.1 L1083.0,313.3 L1083.8,316.3 L1084.7,320.2 L1085.5,324.7 L1086.4,330.0 L1087.2,335.8 L1088.1,342.2 L1088.9,348.9 L1089.8,356.0 L1090.6,363.3 L1091.5,370.7 L1092.4,378.1 L1093.2,385.4 L1094.1,392.5 L1094.9,399.2 L1095.8,405.6 L1096.6,411.4 L1097.5,416.7 L1098.3,421.2 L1099.2,425.1 L1100.0,428.1 L1100.9,430.3 L1101.7,431.7 L1102.6,432.1 L1103.5,431.7 L1104.3,430.6 L1105.2,428.6 L1106.0,426.0 L1106.9,422.7 L1107.7,418.8 L1108.6,414.3 L1109.4,409.3 L1110.3,403.9 L1111.2,398.1 L1112.0,392.2 L1112.9,386.0 L1113.7,379.9 L1114.6,373.7 L1115.4,367.8 L1116.3,362.0 L1117.2,356.6 L1118.0,351.6 L1118.9,347.1 L1119.7,343.2 L1120.6,339.9 L1121.4,337.3 L1122.3,335.3 L1123.1,334.2 L1124.0,333.8 L1124.8,334.1 L1125.7,334.9 L1126.5,336.2 L1127.4,337.9 L1128.2,340.2 L1129.0,342.8 L1129.9,345.7 L1130.7,348.9 L1131.5,352.3 L1132.4,355.8 L1133.2,359.4 L1134.1,362.9 L1134.9,366.3 L1135.7,369.5 L1136.6,372.4 L1137.4,375.0 L1138.2,377.3 L1139.1,379.0 L1139.9,380.3 L1140.8,381.1 L1141.6,381.4 L1142.4,381.0 L1143.3,379.9 L1144.1,378.0 L1144.9,375.3 L1145.8,372.0 L1146.6,368.0 L1147.5,363.5 L1148.3,358.4 L1149.1,352.8 L1150.0,346.9 L1150.8,340.6 L1151.6,334.2 L1152.5,327.6 L1153.3,320.9 L1154.2,314.3 L1155.0,307.9 L1155.8,301.6 L1156.7,295.7 L1157.5,290.1 L1158.3,285.0 L1159.2,280.5 L1160.0,276.5 L1160.9,273.2 L1161.7,270.5 L1162.5,268.6 L1163.4,267.5 L1164.2,267.1 L1165.1,267.4 L1165.9,268.5 L1166.8,270.2 L1167.7,272.5 L1168.5,275.3 L1169.4,278.7 L1170.2,282.4 L1171.1,286.4 L1172.0,290.5 L1172.8,294.8 L1173.7,298.9 L1174.6,302.9 L1175.4,306.6 L1176.3,310.0 L1177.1,312.8 L1178.0,315.1 L1178.9,316.8 L1179.7,317.9 L1180.6,318.2 L1181.5,317.6 L1182.3,315.7 L1183.2,312.7 L1184.0,308.5 L1184.9,303.2 L1185.7,296.9 L1186.6,289.7 L1187.4,281.7 L1188.3,273.1 L1189.2,263.9 L1190.0,254.3 L1190.9,244.5 L1191.7,234.7 L1192.6,224.9 L1193.4,215.3 L1194.3,206.1 L1195.2,197.5 L1196.0,189.5 L1196.9,182.3 L1197.7,176.0 L1198.6,170.7 L1199.4,166.5 L1200.3,163.5 L1201.1,161.6 L1202.0,161.0 L1202.9,161.6 L1203.7,163.5 L1204.6,166.6 L1205.5,170.9 L1206.3,176.3 L1207.2,182.7 L1208.0,190.0 L1208.9,198.1 L1209.8,206.8 L1210.6,216.0 L1211.5,225.5 L1212.3,235.1 L1213.2,244.8 L1214.1,254.3 L1214.9,263.5 L1215.8,272.2 L1216.7,280.3 L1217.5,287.6 L1218.4,294.0 L1219.2,299.4 L1220.1,303.7 L1221.0,306.8 L1221.8,308.7 L1222.7,309.3 L1223.6,308.9 L1224.4,307.8 L1225.3,305.8 L1226.2,303.2 L1227.0,299.9 L1227.9,296.0 L1228.7,291.5 L1229.6,286.6 L1230.5,281.2 L1231.3,275.6 L1232.2,269.8 L1233.1,263.9 L1233.9,257.9 L1234.8,252.1 L1235.6,246.5 L1236.5,241.1 L1237.4,236.2 L1238.2,231.7 L1239.1,227.8 L1240.0,224.5 L1240.8,221.9 L1241.7,219.9 L1242.5,218.8 L1243.4,218.4 L1244.3,219.0 L1245.1,220.8 L1246.0,223.8 L1246.9,227.8 L1247.7,232.9 L1248.6,238.9 L1249.5,245.7 L1250.3,253.2 L1251.2,261.1 L1252.1,269.4 L1253.0,277.9 L1253.8,286.3 L1254.7,294.6 L1255.6,302.5 L1256.4,310.0 L1257.3,316.8 L1258.2,322.8 L1259.0,327.9 L1259.9,331.9 L1260.8,334.9 L1261.6,336.7 L1262.5,337.3 L1263.3,336.7 L1264.2,335.0 L1265.0,332.3 L1265.9,328.5 L1266.7,323.7 L1267.6,318.1 L1268.4,311.9 L1269.3,305.0 L1270.1,297.7 L1271.0,290.2 L1271.8,282.6 L1272.7,275.1 L1273.5,267.8 L1274.4,261.0 L1275.2,254.7 L1276.1,249.1 L1276.9,244.3 L1277.8,240.5 L1278.6,237.8 L1279.5,236.1 L1280.3,235.5 L1281.2,236.0 L1282.0,237.5 L1282.9,240.0 L1283.7,243.5 L1284.6,247.8 L1285.4,253.1 L1286.3,259.1 L1287.1,266.0 L1288.0,273.4 L1288.8,281.5 L1289.7,290.1 L1290.5,299.1 L1291.4,308.4 L1292.2,317.9 L1293.1,327.6 L1294.0,337.2 L1294.8,346.7 L1295.7,356.0 L1296.5,365.0 L1297.4,373.6 L1298.2,381.7 L1299.1,389.1 L1299.9,396.0 L1300.8,402.0 L1301.6,407.3 L1302.5,411.6 L1303.3,415.1 L1304.2,417.6 L1305.0,419.1 L1305.9,419.6 L1306.8,419.0 L1307.6,417.4 L1308.5,414.7 L1309.3,411.0 L1310.2,406.4 L1311.0,400.9 L1311.9,394.7 L1312.7,387.9 L1313.5,380.7 L1314.4,373.1 L1315.2,365.4 L1316.1,357.7 L1317.0,350.1 L1317.8,342.9 L1318.6,336.1 L1319.5,329.9 L1320.3,324.4 L1321.2,319.8 L1322.0,316.1 L1322.9,313.4 L1323.8,311.8 L1324.6,311.2 L1325.4,311.6 L1326.3,312.8 L1327.1,314.8 L1328.0,317.4 L1328.8,320.8 L1329.7,324.8 L1330.5,329.4 L1331.4,334.4 L1332.2,339.7 L1333.1,345.4 L1333.9,351.2 L1334.8,357.0 L1335.6,362.8 L1336.5,368.5 L1337.3,373.8 L1338.2,378.8 L1339.0,383.4 L1339.9,387.4 L1340.7,390.8 L1341.6,393.4 L1342.4,395.4 L1343.3,396.6 L1344.1,397.0 L1344.9,396.6 L1345.8,395.4 L1346.6,393.5 L1347.5,390.9 L1348.3,387.6 L1349.2,383.7 L1350.0,379.3 L1350.9,374.4 L1351.7,369.1 L1352.6,363.6 L1353.4,358.0 L1354.3,352.2 L1355.1,346.6 L1356.0,341.1 L1356.8,335.8 L1357.7,330.9 L1358.5,326.5 L1359.4,322.6 L1360.2,319.3 L1361.1,316.7 L1361.9,314.8 L1362.8,313.6 L1363.6,313.2 L1364.5,313.6 L1365.3,314.9 L1366.2,317.1 L1367.0,320.1 L1367.9,323.8 L1368.7,328.3 L1369.6,333.4 L1370.4,339.1 L1371.3,345.3 L1372.1,352.0 L1373.0,358.9 L1373.8,366.0 L1374.7,373.2 L1375.6,380.5 L1376.4,387.6 L1377.3,394.5 L1378.1,401.2 L1379.0,407.4 L1379.8,413.1 L1380.7,418.2 L1381.5,422.7 L1382.4,426.4 L1383.2,429.4 L1384.1,431.6 L1384.9,432.9 L1385.8,433.3 L1386.6,432.9 L1387.5,431.8 L1388.3,429.9 L1389.2,427.4 L1390.0,424.2 L1390.8,420.3 L1391.7,415.9 L1392.5,410.9 L1393.4,405.5 L1394.2,399.7 L1395.0,393.6 L1395.9,387.4 L1396.7,380.9 L1397.6,374.5 L1398.4,368.0 L1399.3,361.8 L1400.1,355.7 L1400.9,349.9 L1401.8,344.5 L1402.6,339.5 L1403.5,335.1 L1404.3,331.2 L1405.1,328.0 L1406.0,325.5 L1406.8,323.6 L1407.7,322.5 L1408.5,322.1 L1409.4,322.5 L1410.2,323.5 L1411.1,325.3 L1411.9,327.6 L1412.8,330.5 L1413.6,333.9 L1414.5,337.7 L1415.4,341.8 L1416.2,346.1 L1417.1,350.4 L1417.9,354.7 L1418.8,358.8 L1419.7,362.6 L1420.5,366.0 L1421.4,368.9 L1422.2,371.2 L1423.1,373.0 L1423.9,374.0 L1424.8,374.4 L1425.6,374.1 L1426.5,373.1 L1427.3,371.5 L1428.2,369.3 L1429.0,366.6 L1429.9,363.3 L1430.8,359.4 L1431.6,355.2 L1432.5,350.5 L1433.3,345.5 L1434.1,340.2 L1435.0,334.7 L1435.8,329.0 L1436.7,323.3 L1437.5,317.6 L1438.4,311.9 L1439.2,306.4 L1440.1,301.1 L1440.9,296.1 L1441.8,291.4 L1442.6,287.2 L1443.5,283.3 L1444.3,280.0 L1445.2,277.3 L1446.0,275.1 L1446.9,273.5 L1447.8,272.5 L1448.6,272.2 L1449.5,272.5 L1450.3,273.5 L1451.2,275.0 L1452.0,277.1 L1452.9,279.7 L1453.8,282.8 L1454.6,286.3 L1455.5,290.0 L1456.3,293.9 L1457.2,297.9 L1458.1,302.0 L1458.9,305.9 L1459.8,309.6 L1460.6,313.1 L1461.5,316.2 L1462.4,318.8 L1463.2,320.9 L1464.1,322.4 L1464.9,323.4 L1465.8,323.7 L1466.6,323.1 L1467.5,321.3 L1468.3,318.3 L1469.2,314.2 L1470.0,309.0 L1470.8,302.8 L1471.7,295.7 L1472.5,287.7 L1473.3,279.1 L1474.2,270.0 L1475.0,260.4 L1475.9,250.5 L1476.7,240.4 L1477.5,230.4 L1478.4,220.5 L1479.2,210.9 L1480.1,201.8 L1480.9,193.2 L1481.7,185.2 L1482.6,178.1 L1483.4,171.9 L1484.2,166.7 L1485.1,162.6 L1485.9,159.6 L1486.8,157.8 L1487.6,157.2 L1488.4,157.9 L1489.3,159.9 L1490.1,163.2 L1490.9,167.8 L1491.8,173.5 L1492.6,180.2 L1493.5,187.8 L1494.3,196.2 L1495.1,205.1 L1496.0,214.4 L1496.8,223.8 L1497.6,233.3 L1498.5,242.6 L1499.3,251.5 L1500.1,259.9 L1501.0,267.5 L1501.8,274.2 L1502.7,279.9 L1503.5,284.5 L1504.3,287.8 L1505.2,289.8 L1506.0,290.5 L1506.9,289.4 L1507.7,287.6 L1508.6,285.3 L1509.4,282.8 L1510.3,280.1 L1511.1,277.3 L1512.0,274.5 L1512.8,271.6 L1513.7,268.8 L1514.6,266.1 L1515.4,263.4 L1516.3,260.9 L1517.1,258.5 L1518.0,256.2 L1518.8,254.1 L1519.7,252.2 L1520.6,250.5 L1521.4,249.0 L1522.3,247.7 L1523.1,246.6 L1524.0,245.7 L1524.8,245.0 L1525.7,244.5 L1526.5,244.2 L1527.4,244.1 L1528.2,244.2 L1529.1,244.5 L1530.0,245.2 L1530.8,246.5 L1531.7,248.4 L1532.5,251.1 L1533.4,254.5 L1534.2,258.8 L1535.0,263.9 L1535.9,269.7 L1536.8,276.3 L1537.6,283.4 L1538.5,291.0 L1539.3,298.8 L1540.1,306.7 L1541.0,314.3 L1541.8,321.4 L1542.7,327.7 L1543.5,333.0 L1544.4,337.1 L1545.2,339.6 L1546.1,340.5 L1547.0,339.8 L1547.8,337.8 L1548.7,334.5 L1549.5,330.0 L1550.4,324.3 L1551.3,317.7 L1552.1,310.4 L1553.0,302.4 L1553.8,293.9 L1554.7,285.3 L1555.6,276.7 L1556.4,268.2 L1557.3,260.2 L1558.1,252.9 L1559.0,246.3 L1559.9,240.6 L1560.7,236.1 L1561.6,232.8 L1562.4,230.8 L1563.3,230.1 L1564.1,230.4 L1565.0,231.5 L1565.8,233.2 L1566.6,235.5 L1567.5,238.6 L1568.3,242.2 L1569.1,246.4 L1570.0,251.2 L1570.8,256.5 L1571.6,262.4 L1572.5,268.6 L1573.3,275.2 L1574.1,282.2 L1575.0,289.5 L1575.8,297.0 L1576.6,304.7 L1577.5,312.5 L1578.3,320.4 L1579.1,328.3 L1580.0,336.1 L1580.8,343.8 L1581.6,351.3 L1582.5,358.6 L1583.3,365.5 L1584.1,372.2 L1585.0,378.4 L1585.8,384.3 L1586.6,389.6 L1587.5,394.4 L1588.3,398.6 L1589.1,402.2 L1590.0,405.3 L1590.8,407.6 L1591.6,409.3 L1592.5,410.4 L1593.3,410.7 L1594.2,410.1 L1595.0,408.4 L1595.9,405.5 L1596.7,401.7 L1597.6,396.9 L1598.4,391.4 L1599.3,385.4 L1600.1,378.9 L1601.0,372.2 L1601.9,365.5 L1602.7,359.0 L1603.6,352.9 L1604.4,347.5 L1605.3,342.7 L1606.1,338.9 L1607.0,336.0 L1607.8,334.3 L1608.7,333.7 L1609.5,334.1 L1610.4,335.5 L1611.2,337.6 L1612.1,340.6 L1612.9,344.2 L1613.8,348.4 L1614.6,353.2 L1615.4,358.3 L1616.3,363.6 L1617.1,368.9 L1618.0,374.2 L1618.8,379.3 L1619.6,384.1 L1620.5,388.3 L1621.3,391.9 L1622.2,394.9 L1623.0,397.0 L1623.9,398.4 L1624.7,398.8 L1625.5,398.5 L1626.4,397.8 L1627.2,396.4 L1628.1,394.7 L1628.9,392.4 L1629.8,389.6 L1630.6,386.5 L1631.5,383.0 L1632.3,379.1 L1633.1,374.9 L1634.0,370.5 L1634.8,365.9 L1635.7,361.2 L1636.5,356.3 L1637.4,351.5 L1638.2,346.6 L1639.1,341.9 L1639.9,337.3 L1640.8,332.9 L1641.6,328.7 L1642.4,324.8 L1643.3,321.3 L1644.1,318.2 L1645.0,315.4 L1645.8,313.1 L1646.7,311.4 L1647.5,310.0 L1648.4,309.3 L1649.2,309.0 L1650.1,309.3 L1650.9,310.3 L1651.8,311.9 L1652.6,314.1 L1653.5,316.9 L1654.3,320.2 L1655.2,324.1 L1656.0,328.5 L1656.9,333.3 L1657.7,338.6 L1658.6,344.2 L1659.4,350.1 L1660.3,356.2 L1661.1,362.5 L1662.0,369.0 L1662.8,375.5 L1663.7,382.0 L1664.6,388.5 L1665.4,394.8 L1666.3,400.9 L1667.1,406.8" fill="none" stroke="#00ff00" stroke-width="2.9" stroke-linejoin="round" stroke-linecap="butt"/>
<g stroke="#ffff00" stroke-width="1" stroke-dasharray="3 3" shape-rendering="crispEdges">
<line x1="294.5" y1="92" x2="294.5" y2="877"/>
<line x1="583.5" y1="92" x2="583.5" y2="877"/>
<line x1="869.5" y1="92" x2="869.5" y2="877"/>
<line x1="1153.5" y1="92" x2="1153.5" y2="877"/>
<line x1="1438.5" y1="92" x2="1438.5" y2="877"/>
</g>
<circle cx="72.5" cy="321.5" r="3.5" fill="#00ff00"/>
<circle cx="296" cy="636.5" r="4.5" fill="#f0f0c0"/><circle cx="296" cy="636.5" r="3.3" fill="#00e000"/>
<circle cx="1436" cy="636.5" r="4.5" fill="#f0f0c0"/><circle cx="1436" cy="636.5" r="3.3" fill="#00e000"/>
<rect x="293.5" y="496.5" width="1145" height="25" fill="#ccffcc" stroke="#a0a0a0"/>
<g stroke="#000" shape-rendering="crispEdges">
<line x1="308.5" y1="497" x2="308.5" y2="499" stroke="#808080"/><line x1="308.5" y1="519" x2="308.5" y2="521" stroke="#808080"/>
<line x1="323.5" y1="497" x2="323.5" y2="499" stroke="#808080"/><line x1="323.5" y1="519" x2="323.5" y2="521" stroke="#808080"/>
<line x1="337.5" y1="497" x2="337.5" y2="499" stroke="#808080"/><line x1="337.5" y1="519" x2="337.5" y2="521" stroke="#808080"/>
<line x1="352.5" y1="497" x2="352.5" y2="499" stroke="#808080"/><line x1="352.5" y1="519" x2="352.5" y2="521" stroke="#808080"/>
<line x1="366.5" y1="497" x2="366.5" y2="502" stroke="#000"/><line x1="366.5" y1="516" x2="366.5" y2="521" stroke="#000"/>
<line x1="381.5" y1="497" x2="381.5" y2="499" stroke="#808080"/><line x1="381.5" y1="519" x2="381.5" y2="521" stroke="#808080"/>
<line x1="395.5" y1="497" x2="395.5" y2="499" stroke="#808080"/><line x1="395.5" y1="519" x2="395.5" y2="521" stroke="#808080"/>
<line x1="410.5" y1="497" x2="410.5" y2="499" stroke="#808080"/><line x1="410.5" y1="519" x2="410.5" y2="521" stroke="#808080"/>
<line x1="424.5" y1="497" x2="424.5" y2="499" stroke="#808080"/><line x1="424.5" y1="519" x2="424.5" y2="521" stroke="#808080"/>
<line x1="438.5" y1="497" x2="438.5" y2="502" stroke="#000"/><line x1="438.5" y1="516" x2="438.5" y2="521" stroke="#000"/>
<line x1="453.5" y1="497" x2="453.5" y2="499" stroke="#808080"/><line x1="453.5" y1="519" x2="453.5" y2="521" stroke="#808080"/>
<line x1="467.5" y1="497" x2="467.5" y2="499" stroke="#808080"/><line x1="467.5" y1="519" x2="467.5" y2="521" stroke="#808080"/>
<line x1="482.5" y1="497" x2="482.5" y2="499" stroke="#808080"/><line x1="482.5" y1="519" x2="482.5" y2="521" stroke="#808080"/>
<line x1="496.5" y1="497" x2="496.5" y2="499" stroke="#808080"/><line x1="496.5" y1="519" x2="496.5" y2="521" stroke="#808080"/>
<line x1="511.5" y1="497" x2="511.5" y2="502" stroke="#000"/><line x1="511.5" y1="516" x2="511.5" y2="521" stroke="#000"/>
<line x1="525.5" y1="497" x2="525.5" y2="499" stroke="#808080"/><line x1="525.5" y1="519" x2="525.5" y2="521" stroke="#808080"/>
<line x1="540.5" y1="497" x2="540.5" y2="499" stroke="#808080"/><line x1="540.5" y1="519" x2="540.5" y2="521" stroke="#808080"/>
<line x1="554.5" y1="497" x2="554.5" y2="499" stroke="#808080"/><line x1="554.5" y1="519" x2="554.5" y2="521" stroke="#808080"/>
<line x1="569.5" y1="497" x2="569.5" y2="499" stroke="#808080"/><line x1="569.5" y1="519" x2="569.5" y2="521" stroke="#808080"/>
<line x1="583.5" y1="497" x2="583.5" y2="502" stroke="#000"/><line x1="583.5" y1="516" x2="583.5" y2="521" stroke="#000"/>
<line x1="597.5" y1="497" x2="597.5" y2="499" stroke="#808080"/><line x1="597.5" y1="519" x2="597.5" y2="521" stroke="#808080"/>
<line x1="612.5" y1="497" x2="612.5" y2="499" stroke="#808080"/><line x1="612.5" y1="519" x2="612.5" y2="521" stroke="#808080"/>
<line x1="626.5" y1="497" x2="626.5" y2="499" stroke="#808080"/><line x1="626.5" y1="519" x2="626.5" y2="521" stroke="#808080"/>
<line x1="640.5" y1="497" x2="640.5" y2="499" stroke="#808080"/><line x1="640.5" y1="519" x2="640.5" y2="521" stroke="#808080"/>
<line x1="654.5" y1="497" x2="654.5" y2="502" stroke="#000"/><line x1="654.5" y1="516" x2="654.5" y2="521" stroke="#000"/>
<line x1="669.5" y1="497" x2="669.5" y2="499" stroke="#808080"/><line x1="669.5" y1="519" x2="669.5" y2="521" stroke="#808080"/>
<line x1="683.5" y1="497" x2="683.5" y2="499" stroke="#808080"/><line x1="683.5" y1="519" x2="683.5" y2="521" stroke="#808080"/>
<line x1="697.5" y1="497" x2="697.5" y2="499" stroke="#808080"/><line x1="697.5" y1="519" x2="697.5" y2="521" stroke="#808080"/>
<line x1="712.5" y1="497" x2="712.5" y2="499" stroke="#808080"/><line x1="712.5" y1="519" x2="712.5" y2="521" stroke="#808080"/>
<line x1="726.5" y1="497" x2="726.5" y2="502" stroke="#000"/><line x1="726.5" y1="516" x2="726.5" y2="521" stroke="#000"/>
<line x1="740.5" y1="497" x2="740.5" y2="499" stroke="#808080"/><line x1="740.5" y1="519" x2="740.5" y2="521" stroke="#808080"/>
<line x1="755.5" y1="497" x2="755.5" y2="499" stroke="#808080"/><line x1="755.5" y1="519" x2="755.5" y2="521" stroke="#808080"/>
<line x1="769.5" y1="497" x2="769.5" y2="499" stroke="#808080"/><line x1="769.5" y1="519" x2="769.5" y2="521" stroke="#808080"/>
<line x1="783.5" y1="497" x2="783.5" y2="499" stroke="#808080"/><line x1="783.5" y1="519" x2="783.5" y2="521" stroke="#808080"/>
<line x1="798.5" y1="497" x2="798.5" y2="502" stroke="#000"/><line x1="798.5" y1="516" x2="798.5" y2="521" stroke="#000"/>
<line x1="812.5" y1="497" x2="812.5" y2="499" stroke="#808080"/><line x1="812.5" y1="519" x2="812.5" y2="521" stroke="#808080"/>
<line x1="826.5" y1="497" x2="826.5" y2="499" stroke="#808080"/><line x1="826.5" y1="519" x2="826.5" y2="521" stroke="#808080"/>
<line x1="840.5" y1="497" x2="840.5" y2="499" stroke="#808080"/><line x1="840.5" y1="519" x2="840.5" y2="521" stroke="#808080"/>
<line x1="855.5" y1="497" x2="855.5" y2="499" stroke="#808080"/><line x1="855.5" y1="519" x2="855.5" y2="521" stroke="#808080"/>
<line x1="869.5" y1="497" x2="869.5" y2="502" stroke="#000"/><line x1="869.5" y1="516" x2="869.5" y2="521" stroke="#000"/>
<line x1="883.5" y1="497" x2="883.5" y2="499" stroke="#808080"/><line x1="883.5" y1="519" x2="883.5" y2="521" stroke="#808080"/>
<line x1="897.5" y1="497" x2="897.5" y2="499" stroke="#808080"/><line x1="897.5" y1="519" x2="897.5" y2="521" stroke="#808080"/>
<line x1="912.5" y1="497" x2="912.5" y2="499" stroke="#808080"/><line x1="912.5" y1="519" x2="912.5" y2="521" stroke="#808080"/>
<line x1="926.5" y1="497" x2="926.5" y2="499" stroke="#808080"/><line x1="926.5" y1="519" x2="926.5" y2="521" stroke="#808080"/>
<line x1="940.5" y1="497" x2="940.5" y2="502" stroke="#000"/><line x1="940.5" y1="516" x2="940.5" y2="521" stroke="#000"/>
<line x1="954.5" y1="497" x2="954.5" y2="499" stroke="#808080"/><line x1="954.5" y1="519" x2="954.5" y2="521" stroke="#808080"/>
<line x1="968.5" y1="497" x2="968.5" y2="499" stroke="#808080"/><line x1="968.5" y1="519" x2="968.5" y2="521" stroke="#808080"/>
<line x1="983.5" y1="497" x2="983.5" y2="499" stroke="#808080"/><line x1="983.5" y1="519" x2="983.5" y2="521" stroke="#808080"/>
<line x1="997.5" y1="497" x2="997.5" y2="499" stroke="#808080"/><line x1="997.5" y1="519" x2="997.5" y2="521" stroke="#808080"/>
<line x1="1011.5" y1="497" x2="1011.5" y2="502" stroke="#000"/><line x1="1011.5" y1="516" x2="1011.5" y2="521" stroke="#000"/>
<line x1="1025.5" y1="497" x2="1025.5" y2="499" stroke="#808080"/><line x1="1025.5" y1="519" x2="1025.5" y2="521" stroke="#808080"/>
<line x1="1039.5" y1="497" x2="1039.5" y2="499" stroke="#808080"/><line x1="1039.5" y1="519" x2="1039.5" y2="521" stroke="#808080"/>
<line x1="1054.5" y1="497" x2="1054.5" y2="499" stroke="#808080"/><line x1="1054.5" y1="519" x2="1054.5" y2="521" stroke="#808080"/>
<line x1="1068.5" y1="497" x2="1068.5" y2="499" stroke="#808080"/><line x1="1068.5" y1="519" x2="1068.5" y2="521" stroke="#808080"/>
<line x1="1082.5" y1="497" x2="1082.5" y2="502" stroke="#000"/><line x1="1082.5" y1="516" x2="1082.5" y2="521" stroke="#000"/>
<line x1="1096.5" y1="497" x2="1096.5" y2="499" stroke="#808080"/><line x1="1096.5" y1="519" x2="1096.5" y2="521" stroke="#808080"/>
<line x1="1110.5" y1="497" x2="1110.5" y2="499" stroke="#808080"/><line x1="1110.5" y1="519" x2="1110.5" y2="521" stroke="#808080"/>
<line x1="1125.5" y1="497" x2="1125.5" y2="499" stroke="#808080"/><line x1="1125.5" y1="519" x2="1125.5" y2="521" stroke="#808080"/>
<line x1="1139.5" y1="497" x2="1139.5" y2="499" stroke="#808080"/><line x1="1139.5" y1="519" x2="1139.5" y2="521" stroke="#808080"/>
<line x1="1153.5" y1="497" x2="1153.5" y2="502" stroke="#000"/><line x1="1153.5" y1="516" x2="1153.5" y2="521" stroke="#000"/>
<line x1="1167.5" y1="497" x2="1167.5" y2="499" stroke="#808080"/><line x1="1167.5" y1="519" x2="1167.5" y2="521" stroke="#808080"/>
<line x1="1182.5" y1="497" x2="1182.5" y2="499" stroke="#808080"/><line x1="1182.5" y1="519" x2="1182.5" y2="521" stroke="#808080"/>
<line x1="1196.5" y1="497" x2="1196.5" y2="499" stroke="#808080"/><line x1="1196.5" y1="519" x2="1196.5" y2="521" stroke="#808080"/>
<line x1="1210.5" y1="497" x2="1210.5" y2="499" stroke="#808080"/><line x1="1210.5" y1="519" x2="1210.5" y2="521" stroke="#808080"/>
<line x1="1224.5" y1="497" x2="1224.5" y2="502" stroke="#000"/><line x1="1224.5" y1="516" x2="1224.5" y2="521" stroke="#000"/>
<line x1="1238.5" y1="497" x2="1238.5" y2="499" stroke="#808080"/><line x1="1238.5" y1="519" x2="1238.5" y2="521" stroke="#808080"/>
<line x1="1253.5" y1="497" x2="1253.5" y2="499" stroke="#808080"/><line x1="1253.5" y1="519" x2="1253.5" y2="521" stroke="#808080"/>
<line x1="1267.5" y1="497" x2="1267.5" y2="499" stroke="#808080"/><line x1="1267.5" y1="519" x2="1267.5" y2="521" stroke="#808080"/>
<line x1="1281.5" y1="497" x2="1281.5" y2="499" stroke="#808080"/><line x1="1281.5" y1="519" x2="1281.5" y2="521" stroke="#808080"/>
<line x1="1296.5" y1="497" x2="1296.5" y2="502" stroke="#000"/><line x1="1296.5" y1="516" x2="1296.5" y2="521" stroke="#000"/>
<line x1="1310.5" y1="497" x2="1310.5" y2="499" stroke="#808080"/><line x1="1310.5" y1="519" x2="1310.5" y2="521" stroke="#808080"/>
<line x1="1324.5" y1="497" x2="1324.5" y2="499" stroke="#808080"/><line x1="1324.5" y1="519" x2="1324.5" y2="521" stroke="#808080"/>
<line x1="1338.5" y1="497" x2="1338.5" y2="499" stroke="#808080"/><line x1="1338.5" y1="519" x2="1338.5" y2="521" stroke="#808080"/>
<line x1="1352.5" y1="497" x2="1352.5" y2="499" stroke="#808080"/><line x1="1352.5" y1="519" x2="1352.5" y2="521" stroke="#808080"/>
<line x1="1367.5" y1="497" x2="1367.5" y2="502" stroke="#000"/><line x1="1367.5" y1="516" x2="1367.5" y2="521" stroke="#000"/>
<line x1="1381.5" y1="497" x2="1381.5" y2="499" stroke="#808080"/><line x1="1381.5" y1="519" x2="1381.5" y2="521" stroke="#808080"/>
<line x1="1395.5" y1="497" x2="1395.5" y2="499" stroke="#808080"/><line x1="1395.5" y1="519" x2="1395.5" y2="521" stroke="#808080"/>
<line x1="1410.5" y1="497" x2="1410.5" y2="499" stroke="#808080"/><line x1="1410.5" y1="519" x2="1410.5" y2="521" stroke="#808080"/>
<line x1="1424.5" y1="497" x2="1424.5" y2="499" stroke="#808080"/><line x1="1424.5" y1="519" x2="1424.5" y2="521" stroke="#808080"/>
</g>
<g font-size="12.3px" fill="#000">
<text x="296" y="514">0°</text>
<text x="368.9" y="514" text-anchor="middle">45°</text>
<text x="441.2" y="514" text-anchor="middle">90°</text>
<text x="513.5" y="514" text-anchor="middle">135°</text>
<text x="585.7" y="514" text-anchor="middle">180°</text>
<text x="657.2" y="514" text-anchor="middle">225°</text>
<text x="728.7" y="514" text-anchor="middle">270°</text>
<text x="800.2" y="514" text-anchor="middle">315°</text>
<text x="871.7" y="514" text-anchor="middle">360°</text>
<text x="942.7" y="514" text-anchor="middle">405°</text>
<text x="1013.7" y="514" text-anchor="middle">450°</text>
<text x="1084.7" y="514" text-anchor="middle">495°</text>
<text x="1155.7" y="514" text-anchor="middle">540°</text>
<text x="1227.0" y="514" text-anchor="middle">585°</text>
<text x="1298.2" y="514" text-anchor="middle">630°</text>
<text x="1369.5" y="514" text-anchor="middle">675°</text>
<text x="1436.3" y="514" text-anchor="end">720°</text>
</g>
<rect x="272" y="130" width="68" height="18" fill="#fff"/>
<text x="306.0" y="143" font-size="10.9px" fill="#ff0000" text-anchor="middle">(34°) -1.81 В</text>
<circle cx="348.9" cy="151" r="4" fill="#fff" stroke="#000" stroke-width="0.8"/>
<rect x="555" y="159" width="68" height="18" fill="#fff"/>
<text x="589.0" y="172" font-size="10.9px" fill="#ff0000" text-anchor="middle">(31°) -1.50 В</text>
<circle cx="632" cy="180" r="4" fill="#fff" stroke="#000" stroke-width="0.8"/>
<rect x="842" y="150" width="68" height="18" fill="#fff"/>
<text x="876.0" y="163" font-size="10.9px" fill="#ff0000" text-anchor="middle">(32°) -1.60 В</text>
<circle cx="919" cy="171" r="4" fill="#fff" stroke="#000" stroke-width="0.8"/>
<rect x="1126" y="140" width="68" height="18" fill="#fff"/>
<text x="1160.0" y="153" font-size="10.9px" fill="#ff0000" text-anchor="middle">(31°) -1.71 В</text>
<circle cx="1202" cy="161" r="4" fill="#fff" stroke="#000" stroke-width="0.8"/>
<rect x="464" y="400" width="59" height="18" fill="#fff"/>
<text x="493.5" y="413" font-size="10.9px" fill="#ff0000" text-anchor="middle">148° (-32°)</text>
<circle cx="532" cy="420.5" r="4" fill="#fff" stroke="#000" stroke-width="0.8"/>
<rect x="499" y="363" width="59" height="18" fill="#fff"/>
<text x="528.5" y="376" font-size="10.9px" fill="#ff0000" text-anchor="middle">170° (-10°)</text>
<circle cx="566.5" cy="384" r="4" fill="#fff" stroke="#000" stroke-width="0.8"/>
<rect x="750" y="417" width="60" height="18" fill="#fff"/>
<text x="780.0" y="430" font-size="10.9px" fill="#ff0000" text-anchor="middle">328° (-32°)</text>
<circle cx="818" cy="438" r="4" fill="#fff" stroke="#000" stroke-width="0.8"/>
<rect x="794" y="355" width="53" height="18" fill="#fff"/>
<text x="820.5" y="368" font-size="10.9px" fill="#ff0000" text-anchor="middle">352° (-8°)</text>
<circle cx="856" cy="375.5" r="4" fill="#fff" stroke="#000" stroke-width="0.8"/>
<rect x="1035" y="411" width="60" height="18" fill="#fff"/>
<text x="1065.0" y="424" font-size="10.9px" fill="#ff0000" text-anchor="middle">508° (-32°)</text>
<circle cx="1102.6" cy="432" r="4" fill="#fff" stroke="#000" stroke-width="0.8"/>
<rect x="1080" y="360" width="53" height="18" fill="#fff"/>
<text x="1106.5" y="373" font-size="10.9px" fill="#ff0000" text-anchor="middle">533° (-7°)</text>
<circle cx="1141.6" cy="381.4" r="4" fill="#fff" stroke="#000" stroke-width="0.8"/>
<rect x="1318" y="413" width="60" height="18" fill="#fff"/>
<text x="1348.0" y="426" font-size="10.9px" fill="#ff0000" text-anchor="middle">687° (-33°)</text>
<circle cx="1385.8" cy="433.3" r="4" fill="#fff" stroke="#000" stroke-width="0.8"/>
<rect x="1364" y="353" width="53" height="18" fill="#fff"/>
<text x="1390.5" y="366" font-size="10.9px" fill="#ff0000" text-anchor="middle">712° (-8°)</text>
<circle cx="1424.8" cy="374.4" r="4" fill="#fff" stroke="#000" stroke-width="0.8"/>
<g>
<rect x="134.5" y="181.5" width="219" height="34" fill="#ccffcc" stroke="#000"/>
<clipPath id="rc"><rect x="135" y="182" width="218" height="33"/></clipPath>
<g clip-path="url(#rc)" font-size="25.6px">
<text x="158.3" y="205.6" fill="#800080" textLength="47.6" lengthAdjust="spacingAndGlyphs">-143</text>
<text x="229.6" y="205.6" fill="#0000ff" textLength="51" lengthAdjust="spacingAndGlyphs">865°</text>
<text x="301.3" y="205.6" fill="#000" textLength="54.5" lengthAdjust="spacingAndGlyphs">1008</text>
</g>
<rect x="135" y="182" width="23" height="33" fill="#e6cce6"/>
<rect x="205" y="182" width="24" height="33" fill="#ccccff"/>
<rect x="276" y="182" width="23.5" height="33" fill="#cccccc"/>
<polygon points="138,186.5 155,186.5 146.5,196" fill="#800080"/><rect x="146" y="195" width="1" height="16" fill="#800080"/>
<polygon points="209,186.5 226,186.5 217.5,196" fill="#0000ff"/><rect x="217" y="195" width="1" height="16" fill="#0000ff"/>
<polygon points="288,191 280.5,210 295.5,210" fill="none" stroke="#000" stroke-width="1"/>
</g>
<polygon points="60,83 75,83 67.5,90.5" fill="#880088"/><rect x="67" y="90" width="1" height="7" fill="#880088"/>
<text x="67.5" y="89.3" font-size="7px" font-weight="bold" fill="#fff" text-anchor="middle">1</text>
<polygon points="1659.8,83 1675.3,83 1667.6,90.6" fill="#0000ff"/>
<text x="1667.6" y="89.2" font-size="7px" font-weight="bold" fill="#fff" text-anchor="middle">2</text>
<polygon points="1672,98 1681,98 1676.5,91.8" fill="#00ff00"/>
<polygon points="1672,287.5 1676.5,283 1681,287.5 1676.5,292" fill="#00ff00"/>
<polygon points="1672,478 1681,478 1676.5,484" fill="#00ff00"/>
</svg>
<div class="a" style="left:1683px;top:81px;width:1px;height:922px;background:#a0a0a0"></div>
<div class="a" style="left:34px;top:896px;width:1649px;height:1px;background:#000"></div>
<div class="a" style="left:34px;top:897px;width:1649px;height:17px;background:#fafafa;background-image:repeating-conic-gradient(#ffffff 0% 25%,#f0f0f0 0% 50%);background-size:2px 2px"></div>
<div class="btn3d" style="left:34px;top:897px;width:17px;height:17px"></div>
<div class="a" style="left:51px;top:897px;width:68px;height:17px;background:#fff;font-size:10.6px;line-height:17px;padding-left:3px;white-space:pre">182.1 мс</div><div class="arr" style="left:105.5px;top:904px;border-left-width:4px;border-right-width:4px"></div>
<div class="btn3d" style="left:119px;top:897px;width:17px;height:17px"></div>
<div class="a" style="left:136px;top:897px;width:65px;height:17px;background:#fff;font-size:10.6px;line-height:17px;padding-left:3px">18</div><div class="arr" style="left:186.5px;top:904px;border-left-width:4px;border-right-width:4px"></div>
<svg class="a" style="left:34px;top:896.5px" width="102" height="18"><circle cx="8.3" cy="9" r="5.5" fill="#fff" stroke="#000"/><rect x="5" y="8" width="7" height="2" fill="#000080"/><circle cx="93.3" cy="9" r="5.5" fill="#fff" stroke="#000"/><rect x="90" y="8" width="7" height="2" fill="#a00000"/><rect x="92.5" y="5.5" width="2" height="7" fill="#a00000"/></svg>
<div class="btn3d" style="left:200.5px;top:897px;width:24px;height:17px"></div><svg class="a" style="left:200.5px;top:896.5px" width="24" height="18"><rect x="7.0" y="5" width="1.6" height="8" fill="#000"/><polygon points="16.5,5 16.5,13 9.0,9" fill="#000"/></svg>
<div class="btn3d" style="left:224.5px;top:897px;width:17.5px;height:17px"></div><svg class="a" style="left:224.5px;top:896.5px" width="17.5" height="18"><polygon points="9.55,5 9.55,13 5.55,9" fill="#000"/></svg>
<div class="btn3d" style="left:1423.5px;top:897px;width:17px;height:17px"></div><svg class="a" style="left:1423.5px;top:896.5px" width="17" height="18"><polygon points="7.0,5 7.0,13 11.0,9" fill="#000"/></svg>
<div class="btn3d" style="left:1441.5px;top:897px;width:23px;height:17px"></div><svg class="a" style="left:1441.5px;top:896.5px" width="23" height="18"><rect x="14.9" y="5" width="1.6" height="8" fill="#000"/><polygon points="7.0,5 7.0,13 14.5,9" fill="#000"/></svg>
<div class="btn3d" style="left:1465.3px;top:897px;width:17px;height:17px"></div><svg class="a" style="left:1465.3px;top:896.5px" width="17" height="18"><circle cx="8.5" cy="9" r="5.5" fill="#fff" stroke="#000"/><rect x="5.0" y="8" width="7" height="2" fill="#008000"/><rect x="7.5" y="5.5" width="2" height="7" fill="#008000"/></svg>
<div class="btn3d" style="left:1482.3px;top:897px;width:23.4px;height:17px"></div><svg class="a" style="left:1482.3px;top:896.5px" width="23.4" height="18"><rect x="6.699999999999999" y="5" width="1.6" height="8" fill="#000"/><polygon points="16.2,5 16.2,13 8.7,9" fill="#000"/></svg>
<div class="btn3d" style="left:1505.7px;top:897px;width:24.3px;height:17px"></div><svg class="a" style="left:1505.7px;top:896.5px" width="24.3" height="18"><polygon points="15.15,5 15.15,13 8.15,9" fill="#000"/></svg>
<div class="a" style="left:1530px;top:897px;width:57px;height:17px;background:#f0f0f0;text-align:center;line-height:17px;font-size:11px">1</div>
<div class="btn3d" style="left:1587px;top:897px;width:23px;height:17px"></div><svg class="a" style="left:1587px;top:896.5px" width="23" height="18"><polygon points="8.0,5 8.0,13 15.5,9" fill="#000"/></svg>
<div class="btn3d" style="left:1610px;top:897px;width:24px;height:17px"></div><svg class="a" style="left:1610px;top:896.5px" width="24" height="18"><rect x="15.4" y="5" width="1.6" height="8" fill="#000"/><polygon points="7.5,5 7.5,13 15.0,9" fill="#000"/></svg>
<div class="btn3d" style="left:1634px;top:897px;width:24px;height:17px"></div><svg class="a" style="left:1634px;top:896.5px" width="24" height="18"><polygon points="8.5,5 8.5,13 16.0,9" fill="#008000"/></svg>
<div class="btn3d" style="left:1658px;top:897px;width:25px;height:17px"></div><svg class="a" style="left:1658px;top:896.5px" width="25" height="18"><polygon points="9.0,5 9.0,13 16.5,9" fill="#0000ff"/></svg>
<div class="btn3d" style="left:1057px;top:897px;width:17px;height:17px"></div>
<div class="a" style="left:509px;top:914px;width:670px;height:7px;border:1px solid #a8a8a8;background:#f4f4f4"></div>
<div class="a" style="left:522px;top:917px;width:640px;height:1px;background:repeating-linear-gradient(90deg,#3399ff 0 1px,transparent 1px 3px)"></div>
<div class="a" style="left:514.5px;top:916px;width:0;height:0;border-left:3px solid transparent;border-right:3px solid transparent;border-top:3.5px solid #3399ff"></div>
<div class="a" style="left:1168.5px;top:916px;width:0;height:0;border-left:3px solid transparent;border-right:3px solid transparent;border-top:3.5px solid #3399ff"></div>
<div class="grp" style="left:445px;top:930px;width:303px;height:70px"></div>
<div class="a" style="left:449px;top:926px;width:215px;height:10px;background:#f0f0f0"></div>
<div class="grp" style="left:752.5px;top:930px;width:104px;height:70px"></div>
<div class="gt" style="left:759px;top:925px;color:#000080">Частота</div>
<div class="grp" style="left:862.5px;top:930px;width:124px;height:70px"></div>
<div class="gt" style="left:869px;top:925px;color:#606060;letter-spacing:-0.25px">Синхронизация</div>
<div class="grp" style="left:992px;top:930px;width:175px;height:70px"></div>
<div class="gt" style="left:998.5px;top:925px;color:#000080">Управление</div>
<div class="grp" style="left:1172px;top:930px;width:68px;height:70px"></div>
<div class="gt" style="left:1179px;top:925px;color:#000080">Таймеры</div>
<div class="chb" style="left:450px;width:48px;background:linear-gradient(#66ff66,#00e000 45%,#00c000);color:#000;font-weight:bold">1</div>
<div class="chb" style="left:499.5px;width:25.5px">2</div>
<div class="chb" style="left:526.5px;width:25.5px">3</div>
<div class="chb" style="left:553px;width:26px;background:linear-gradient(#5a86ff,#2255ee 50%,#1040d0);color:#000;font-weight:bold">4</div>
<div class="chb" style="left:580.3px;width:25.8px">5</div>
<div class="chb" style="left:607.2px;width:25.8px">6</div>
<div class="chb" style="left:634.2px;width:25.8px">D</div>
<div class="a" style="left:452px;top:950px;width:177px;height:21px;border:1px solid #00f000;background:#fff;font-size:11.2px;line-height:19.5px;padding-left:3.5px;white-space:pre">Датчик разряжения</div>
<div class="btn3d" style="left:610px;top:952px;width:17px;height:17px"></div><div class="a" style="left:614px;top:959px;width:9px;height:2px;background:repeating-linear-gradient(90deg,#000 0 2px,transparent 2px 3.5px)"></div>
<svg class="a" style="left:630px;top:950px" width="24" height="22" viewBox="630 950 24 22"><rect x="636.5" y="952.8" width="10" height="10" fill="#fff" stroke="#000" stroke-width="1.3"/><rect x="637" y="960" width="9" height="2.6" fill="#404040"/><path d="M638.5,960.7 H645" stroke="#30c030" stroke-width="0.8" stroke-dasharray="1 1"/><path d="M639.5,955.5 L642.5,958.5" stroke="#404040" stroke-width="0.8"/><path d="M641.5,954.5 l2,0" stroke="#808080" stroke-width="0.6"/><path d="M636,962.5 C632.5,963.5 632.5,967.8 636.5,968" fill="none" stroke="#000090" stroke-width="1.2"/><polygon points="636,965.8 639.6,968 636,970.2" fill="#000090"/><path d="M647,962.5 C650.8,963.5 650.8,967.8 646.5,968" fill="none" stroke="#ff0000" stroke-width="1.2"/><polygon points="647.2,965.8 643.6,968 647.2,970.2" fill="#ff0000"/></svg>
<div class="a" style="left:453px;top:972px;width:24px;height:23px;background:#fafafa;border-left:1px solid #9a9a9a;border-top:1px solid #b8b8b8"></div>
<div class="a" style="left:478.5px;top:972px;width:23.5px;height:23px;background:#fafafa;border-left:1px solid #9a9a9a;border-top:1px solid #b8b8b8"></div>
<div class="a" style="left:503.5px;top:972px;width:23.5px;height:23px;background:#fafafa;border-left:1px solid #9a9a9a;border-top:1px solid #b8b8b8"></div>
<div class="a" style="left:528.3px;top:972px;width:24px;height:23px;background:#fafafa;border-left:1px solid #9a9a9a;border-top:1px solid #b8b8b8"></div>
<svg class="a" style="left:453px;top:972px" width="150" height="24" font-family="Liberation Serif,serif">
<ellipse cx="13.6" cy="13.6" rx="5.6" ry="3.4" fill="#c8c8c8" stroke="#303030" stroke-width="1"/><circle cx="13.2" cy="13.6" r="2.3" fill="#000"/><path d="M7.5,11.2 C10,8.2 17,8.2 19.5,10.8" stroke="#303030" stroke-width="1.8" fill="none"/><path d="M9.5,17.6 C12,18.8 15.5,18.8 18,17.2" stroke="#c04040" stroke-width="0.8" fill="none"/>
<path d="M30.0,7.6 L30.5,6.5 L31.0,5.9 L31.5,6.2 L32.0,7.2 L32.5,8.4 L33.0,9.2 L33.5,9.2 L34.0,8.3 L34.5,7.1 L35.0,6.1 L35.5,5.9 L36.0,6.6 L36.5,7.7 L37.0,8.8 L37.5,9.3 L38.0,8.9 L38.5,7.8 L39.0,6.7 L39.5,6.0 L40.0,6.1 L40.5,7.0 L41.0,8.2 L41.5,9.1 L42.0,9.2 L42.5,8.5 L43.0,7.4 L43.5,6.3 L44.0,5.9 L44.5,6.4 L45.0,7.5 L45.5,8.6 L46.0,9.3 L46.5,9.1" fill="none" stroke="#800080" stroke-width="1.1"/>
<path d="M30.0,18.2 L30.5,17.1 L31.0,16.5 L31.5,16.8 L32.0,17.8 L32.5,19.0 L33.0,19.8 L33.5,19.8 L34.0,18.9 L34.5,17.7 L35.0,16.7 L35.5,16.5 L36.0,17.2 L36.5,18.3 L37.0,19.4 L37.5,19.9 L38.0,19.5 L38.5,18.4 L39.0,17.3 L39.5,16.6 L40.0,16.7 L40.5,17.6 L41.0,18.8 L41.5,19.7 L42.0,19.8 L42.5,19.1 L43.0,18.0 L43.5,16.9 L44.0,16.5 L44.5,17.0 L45.0,18.1 L45.5,19.2 L46.0,19.9 L46.5,19.7" fill="none" stroke="#800080" stroke-width="1.1"/>
<polygon points="36,11.8 42,11.8 39,14.8" fill="#000"/>
<polygon points="55.8,11 70,11 62.9,3.6" fill="#800080"/><rect x="59.6" y="10.5" width="6.6" height="3" fill="#800080"/>
<polygon points="55.8,15 70,15 62.9,22.4" fill="#0000ff"/><rect x="59.6" y="13" width="6.6" height="2.5" fill="#0000ff"/>
<rect x="62.1" y="9" width="1.6" height="8" fill="#fff"/><rect x="61.1" y="8.6" width="3.6" height="1.2" fill="#fff"/><rect x="61.1" y="16.4" width="3.6" height="1.2" fill="#fff"/>
<path d="M79.7,7 H97.3 M79.7,19.7 H97.3" stroke="#000" stroke-width="1.3"/><path d="M79.7,13.4 H97.3" stroke="#000" stroke-width="1.3" stroke-dasharray="2 1"/>
<text x="108" y="16.5" font-size="14px" font-style="italic" font-weight="bold" fill="#000">f</text><text x="113.3" y="17" font-size="8.5px" font-style="italic" font-weight="bold" fill="#000">x</text>
<path d="M132.5,8.5 L142.5,19" stroke="#000" stroke-width="2.6" stroke-linecap="round"/><path d="M132.8,8.8 L142.2,18.7" stroke="#e8e8e8" stroke-width="1" stroke-linecap="round"/>
<path d="M130,7 a3,3 0 1 1 5,-1.5 l-2,0.3 l-0.8,1.6 l1.2,1.4 z" fill="#e0e0e0" stroke="#000" stroke-width="0.9"/>
<path d="M143.5,5.8 L136.5,13.5" stroke="#000" stroke-width="1.8"/><path d="M143.2,6 L137,13" stroke="#b0b0b0" stroke-width="0.6"/>
<path d="M136.5,13.5 L131,19" stroke="#1a3a90" stroke-width="4.4" stroke-linecap="round"/><path d="M136.3,13.7 L131.2,18.8" stroke="#5a82e0" stroke-width="2.6" stroke-linecap="round"/>
</svg>
<svg class="a" style="left:650px;top:925px" width="210" height="78" viewBox="650 925 210 78">
<defs><linearGradient id="kg" x1="0" y1="0" x2="1" y2="1"><stop offset="0.12" stop-color="#ececec"/><stop offset="0.45" stop-color="#a0a0a0"/><stop offset="0.7" stop-color="#303030"/><stop offset="0.9" stop-color="#101010"/></linearGradient></defs>
<line x1="684.8" y1="987.7" x2="682.3" y2="990.2" stroke="#8c8c8c" stroke-width="0.7"/>
<line x1="683.7" y1="986.6" x2="681.1" y2="988.9" stroke="#8c8c8c" stroke-width="0.7"/>
<line x1="682.8" y1="985.4" x2="680.0" y2="987.5" stroke="#8c8c8c" stroke-width="0.7"/>
<line x1="681.9" y1="984.2" x2="679.0" y2="986.0" stroke="#8c8c8c" stroke-width="0.7"/>
<line x1="681.2" y1="982.9" x2="678.1" y2="984.5" stroke="#8c8c8c" stroke-width="0.7"/>
<line x1="680.6" y1="981.5" x2="677.3" y2="982.8" stroke="#8c8c8c" stroke-width="0.7"/>
<line x1="680.0" y1="980.1" x2="676.7" y2="981.1" stroke="#8c8c8c" stroke-width="0.7"/>
<line x1="679.6" y1="978.6" x2="676.2" y2="979.4" stroke="#8c8c8c" stroke-width="0.7"/>
<line x1="679.3" y1="977.1" x2="675.9" y2="977.7" stroke="#8c8c8c" stroke-width="0.7"/>
<line x1="679.2" y1="975.6" x2="675.7" y2="975.9" stroke="#8c8c8c" stroke-width="0.7"/>
<line x1="679.1" y1="974.1" x2="675.6" y2="974.1" stroke="#8c8c8c" stroke-width="0.7"/>
<line x1="679.2" y1="972.6" x2="675.7" y2="972.3" stroke="#8c8c8c" stroke-width="0.7"/>
<line x1="679.3" y1="971.1" x2="675.9" y2="970.5" stroke="#8c8c8c" stroke-width="0.7"/>
<line x1="679.6" y1="969.6" x2="676.2" y2="968.8" stroke="#8c8c8c" stroke-width="0.7"/>
<line x1="680.0" y1="968.1" x2="676.7" y2="967.1" stroke="#8c8c8c" stroke-width="0.7"/>
<line x1="680.6" y1="966.7" x2="677.3" y2="965.4" stroke="#8c8c8c" stroke-width="0.7"/>
<line x1="681.2" y1="965.3" x2="678.1" y2="963.7" stroke="#8c8c8c" stroke-width="0.7"/>
<line x1="681.9" y1="964.0" x2="679.0" y2="962.2" stroke="#8c8c8c" stroke-width="0.7"/>
<line x1="682.8" y1="962.8" x2="680.0" y2="960.7" stroke="#8c8c8c" stroke-width="0.7"/>
<line x1="683.7" y1="961.6" x2="681.1" y2="959.3" stroke="#8c8c8c" stroke-width="0.7"/>
<line x1="684.8" y1="960.5" x2="682.3" y2="958.0" stroke="#8c8c8c" stroke-width="0.7"/>
<line x1="685.9" y1="959.4" x2="683.6" y2="956.8" stroke="#8c8c8c" stroke-width="0.7"/>
<line x1="687.1" y1="958.5" x2="685.0" y2="955.7" stroke="#8c8c8c" stroke-width="0.7"/>
<line x1="688.3" y1="957.6" x2="686.5" y2="954.7" stroke="#8c8c8c" stroke-width="0.7"/>
<line x1="689.6" y1="956.9" x2="688.0" y2="953.8" stroke="#8c8c8c" stroke-width="0.7"/>
<line x1="691.0" y1="956.3" x2="689.7" y2="953.0" stroke="#8c8c8c" stroke-width="0.7"/>
<line x1="692.4" y1="955.7" x2="691.4" y2="952.4" stroke="#8c8c8c" stroke-width="0.7"/>
<line x1="693.9" y1="955.3" x2="693.1" y2="951.9" stroke="#8c8c8c" stroke-width="0.7"/>
<line x1="695.4" y1="955.0" x2="694.8" y2="951.6" stroke="#8c8c8c" stroke-width="0.7"/>
<line x1="696.9" y1="954.9" x2="696.6" y2="951.4" stroke="#8c8c8c" stroke-width="0.7"/>
<line x1="698.4" y1="954.8" x2="698.4" y2="951.3" stroke="#8c8c8c" stroke-width="0.7"/>
<line x1="699.9" y1="954.9" x2="700.2" y2="951.4" stroke="#8c8c8c" stroke-width="0.7"/>
<line x1="701.4" y1="955.0" x2="702.0" y2="951.6" stroke="#8c8c8c" stroke-width="0.7"/>
<line x1="702.9" y1="955.3" x2="703.7" y2="951.9" stroke="#8c8c8c" stroke-width="0.7"/>
<line x1="704.4" y1="955.7" x2="705.4" y2="952.4" stroke="#8c8c8c" stroke-width="0.7"/>
<line x1="705.8" y1="956.3" x2="707.1" y2="953.0" stroke="#8c8c8c" stroke-width="0.7"/>
<line x1="707.2" y1="956.9" x2="708.8" y2="953.8" stroke="#8c8c8c" stroke-width="0.7"/>
<line x1="708.5" y1="957.6" x2="710.3" y2="954.7" stroke="#8c8c8c" stroke-width="0.7"/>
<line x1="709.7" y1="958.5" x2="711.8" y2="955.7" stroke="#8c8c8c" stroke-width="0.7"/>
<line x1="710.9" y1="959.4" x2="713.2" y2="956.8" stroke="#8c8c8c" stroke-width="0.7"/>
<line x1="712.0" y1="960.5" x2="714.5" y2="958.0" stroke="#8c8c8c" stroke-width="0.7"/>
<line x1="713.1" y1="961.6" x2="715.7" y2="959.3" stroke="#8c8c8c" stroke-width="0.7"/>
<line x1="714.0" y1="962.8" x2="716.8" y2="960.7" stroke="#8c8c8c" stroke-width="0.7"/>
<line x1="714.9" y1="964.0" x2="717.8" y2="962.2" stroke="#8c8c8c" stroke-width="0.7"/>
<line x1="715.6" y1="965.3" x2="718.7" y2="963.7" stroke="#8c8c8c" stroke-width="0.7"/>
<line x1="716.2" y1="966.7" x2="719.5" y2="965.4" stroke="#8c8c8c" stroke-width="0.7"/>
<line x1="716.8" y1="968.1" x2="720.1" y2="967.1" stroke="#8c8c8c" stroke-width="0.7"/>
<line x1="717.2" y1="969.6" x2="720.6" y2="968.8" stroke="#8c8c8c" stroke-width="0.7"/>
<line x1="717.5" y1="971.1" x2="720.9" y2="970.5" stroke="#8c8c8c" stroke-width="0.7"/>
<line x1="717.6" y1="972.6" x2="721.1" y2="972.3" stroke="#8c8c8c" stroke-width="0.7"/>
<line x1="717.7" y1="974.1" x2="721.2" y2="974.1" stroke="#8c8c8c" stroke-width="0.7"/>
<line x1="717.6" y1="975.6" x2="721.1" y2="975.9" stroke="#8c8c8c" stroke-width="0.7"/>
<line x1="717.5" y1="977.1" x2="720.9" y2="977.7" stroke="#8c8c8c" stroke-width="0.7"/>
<line x1="717.2" y1="978.6" x2="720.6" y2="979.4" stroke="#8c8c8c" stroke-width="0.7"/>
<line x1="716.8" y1="980.1" x2="720.1" y2="981.1" stroke="#8c8c8c" stroke-width="0.7"/>
<line x1="716.2" y1="981.5" x2="719.5" y2="982.8" stroke="#8c8c8c" stroke-width="0.7"/>
<line x1="715.6" y1="982.9" x2="718.7" y2="984.5" stroke="#8c8c8c" stroke-width="0.7"/>
<line x1="714.9" y1="984.2" x2="717.8" y2="986.0" stroke="#8c8c8c" stroke-width="0.7"/>
<line x1="714.0" y1="985.4" x2="716.8" y2="987.5" stroke="#8c8c8c" stroke-width="0.7"/>
<line x1="713.1" y1="986.6" x2="715.7" y2="988.9" stroke="#8c8c8c" stroke-width="0.7"/>
<line x1="712.0" y1="987.7" x2="714.5" y2="990.2" stroke="#8c8c8c" stroke-width="0.7"/>
<line x1="684.1" y1="987.4" x2="679.8" y2="991.5" stroke="#000" stroke-width="1"/>
<line x1="679.2" y1="970.7" x2="673.3" y2="969.7" stroke="#000" stroke-width="1"/>
<line x1="688.1" y1="957.6" x2="684.9" y2="952.5" stroke="#000" stroke-width="1"/>
<line x1="705.7" y1="956.0" x2="708.0" y2="950.5" stroke="#000" stroke-width="1"/>
<line x1="716.9" y1="968.1" x2="722.7" y2="966.2" stroke="#000" stroke-width="1"/>
<line x1="712.7" y1="987.4" x2="717.0" y2="991.5" stroke="#000" stroke-width="1"/>
<circle cx="698.4" cy="974.1" r="16.5" fill="#f0f0f0" stroke="url(#kg)" stroke-width="2.8"/>
<polygon points="682,968.3 688.3,967.8 686,973" fill="#0000e0"/>
<line x1="785.1" y1="984.5" x2="782.1" y2="986.3" stroke="#b8b8b8" stroke-width="0.8"/>
<line x1="783.2" y1="980.0" x2="779.8" y2="980.9" stroke="#b8b8b8" stroke-width="0.8"/>
<line x1="782.4" y1="975.0" x2="778.9" y2="975.1" stroke="#b8b8b8" stroke-width="0.8"/>
<line x1="782.8" y1="970.0" x2="779.4" y2="969.3" stroke="#b8b8b8" stroke-width="0.8"/>
<line x1="784.5" y1="965.3" x2="781.3" y2="963.8" stroke="#b8b8b8" stroke-width="0.8"/>
<line x1="787.2" y1="961.1" x2="784.5" y2="958.9" stroke="#b8b8b8" stroke-width="0.8"/>
<line x1="790.9" y1="957.7" x2="788.8" y2="954.9" stroke="#b8b8b8" stroke-width="0.8"/>
<line x1="795.2" y1="955.3" x2="793.9" y2="952.0" stroke="#b8b8b8" stroke-width="0.8"/>
<line x1="800.0" y1="954.0" x2="799.6" y2="950.5" stroke="#b8b8b8" stroke-width="0.8"/>
<line x1="805.0" y1="953.9" x2="805.4" y2="950.4" stroke="#b8b8b8" stroke-width="0.8"/>
<line x1="809.9" y1="955.0" x2="811.1" y2="951.7" stroke="#b8b8b8" stroke-width="0.8"/>
<line x1="814.4" y1="957.3" x2="816.3" y2="954.4" stroke="#b8b8b8" stroke-width="0.8"/>
<line x1="818.1" y1="960.6" x2="820.7" y2="958.2" stroke="#b8b8b8" stroke-width="0.8"/>
<line x1="821.0" y1="964.7" x2="824.1" y2="963.0" stroke="#b8b8b8" stroke-width="0.8"/>
<line x1="822.8" y1="969.3" x2="826.2" y2="968.5" stroke="#b8b8b8" stroke-width="0.8"/>
<line x1="823.4" y1="974.3" x2="826.9" y2="974.3" stroke="#b8b8b8" stroke-width="0.8"/>
<line x1="822.8" y1="979.3" x2="826.2" y2="980.1" stroke="#b8b8b8" stroke-width="0.8"/>
<line x1="821.0" y1="983.9" x2="824.1" y2="985.6" stroke="#b8b8b8" stroke-width="0.8"/>
<line x1="786.0" y1="984.0" x2="781.2" y2="986.8" stroke="#000" stroke-width="1"/>
<line x1="789.9" y1="959.8" x2="786.2" y2="955.7" stroke="#000" stroke-width="1"/>
<line x1="802.9" y1="954.8" x2="802.9" y2="949.3" stroke="#000" stroke-width="1"/>
<line x1="814.9" y1="958.9" x2="818.3" y2="954.6" stroke="#000" stroke-width="1"/>
<line x1="821.0" y1="967.0" x2="826.1" y2="964.9" stroke="#000" stroke-width="1"/>
<line x1="817.8" y1="986.8" x2="822.1" y2="990.4" stroke="#b0b0b0" stroke-width="1"/>
<circle cx="802.9" cy="974.3" r="16.5" fill="#f0f0f0" stroke="url(#kg)" stroke-width="2.8"/>
<polygon points="813,967 819.5,967 816.5,971.5" fill="#0000e0"/>
</svg>
<div class="kl" style="left:673.8px;top:942.7px">10В</div>
<div class="kl" style="left:707.1px;top:939.5px">100В</div>
<div class="kl" style="left:663.8px;top:959.5px">1В</div>
<div class="kl" style="left:724px;top:956.7px">200В</div>
<div class="kl" style="left:658px;top:987.6px">0.1В</div>
<div class="kl" style="left:719.3px;top:987.6px">500В</div>
<div class="kl" style="left:799px;top:938px">250K</div>
<div class="kl" style="left:765px;top:947.4px">100K</div>
<div class="kl" style="left:820px;top:947.4px">333K</div>
<div class="kl" style="left:828px;top:959.7px">500K</div>
<div class="kl" style="left:770.5px;top:987.2px">1K</div>
<div class="kl" style="left:823.5px;top:987.2px;color:#b8b8b8">1M</div>
<div class="kl" style="left:692.8px;top:969.5px;font-size:11px;line-height:12px;transform:scaleX(.85);transform-origin:0 0">3В</div>
<div class="kl" style="left:790.5px;top:968.5px;font-size:12.5px;line-height:13px;transform:scaleX(.86);transform-origin:0 0">500K</div>
<div class="a" style="left:928px;top:942px;width:24px;height:22px;background:#f8f8f8"></div><div class="a" style="left:956px;top:970px;width:24px;height:22px;background:#f8f8f8"></div>
<svg class="a" style="left:870px;top:940px" width="115" height="56" viewBox="870 940 115 56" fill="none" stroke="#9a9a9a" stroke-width="1.2">
<polygon points="875,948 875,956 880,952" fill="#9a9a9a" stroke="none"/><path d="M880,952 H891" stroke-dasharray="1 1"/><path d="M876,958 C884,966 884,944 891,946"/>
<path d="M903,959.5 H912 V947.5 H920"/><path d="M908,950 V957"/><polygon points="905.5,952 910.5,952 908,948" fill="#9a9a9a" stroke="none"/>
<path d="M932,948.5 H940 V960.5 H949"/><path d="M944,950 V957"/><polygon points="941.5,955 946.5,955 944,959" fill="#9a9a9a" stroke="none"/>
<polygon points="959,946 959,953 963.5,949.5" fill="#9a9a9a" stroke="none"/><path d="M963,949.5 H977" stroke-dasharray="1 1"/><path d="M959,957 C965,962 968,948 975,944"/><path d="M968,950 l6,4 l3,6 l-3,1 l-2,-4 l-3,2z" fill="#9a9a9a" stroke="none"/>
<polygon points="932,976 932,984 936.5,980" fill="#9a9a9a" stroke="none"/><path d="M936,977 H946 M936,983 H946"/><path d="M937,980 H946" stroke-dasharray="1 1"/><polygon points="943,972.5 950,972.5 946.5,976" fill="#9a9a9a" stroke="none"/><polygon points="943,988 950,988 946.5,984.5" fill="#9a9a9a" stroke="none"/>
<path d="M959,982.5 H977" stroke-width="1.6"/><polygon points="962,979 962,986 967.5,982.5" fill="#9a9a9a" stroke="none"/><polygon points="974,979 974,986 968.5,982.5" fill="#9a9a9a" stroke="none"/>
</svg>
<div class="a" style="left:871px;top:971px;width:47.5px;height:22px;border:1px solid #a8a8a8;font-size:11px;line-height:20px;padding-left:5px">4</div><div class="arr" style="left:903px;top:980.5px;border-top-color:#909090;border-left-width:4px;border-right-width:4px"></div>
<div class="cb" style="left:996px;top:940px;width:34.5px;height:28px"></div>
<div class="cb" style="left:1033.5px;top:940px;width:45.5px;height:28px"></div>
<div class="cb" style="left:1082px;top:940px;width:45.7px;height:28px;border-color:#ff0000;background:#f3f9f9"></div>
<div class="cb" style="left:1131px;top:940px;width:31px;height:28px;border-color:#ff0000;background:#f3f9f9"></div>
<div class="cb" style="left:996px;top:970.5px;width:83px;height:27.5px;border-width:1.5px"></div>
<div class="a" style="left:1082px;top:970.5px;width:45.7px;height:27.5px;border:1px solid #2068c8;border-radius:4px;background:#f2f2f2;color:#008000;font-weight:bold;font-size:11.8px;text-align:center;line-height:26.5px;padding-right:2px">3.21</div>
<div class="cb" style="left:1131px;top:970.5px;width:31px;height:27.5px"></div>
<div class="a" style="left:1036px;top:976.5px;font-weight:bold;font-size:12.5px;white-space:pre">Пуск</div>
<svg class="a" style="left:996px;top:940px" width="170" height="60" viewBox="996 940 170 60" font-family="Liberation Sans,sans-serif">
<rect x="1007.2" y="947.8" width="3.6" height="13.4" fill="#0000e0" stroke="#007000" stroke-width="1"/><rect x="1012.8" y="947.8" width="3.8" height="13.4" fill="#0000e0" stroke="#007000" stroke-width="1"/>
<path d="M1042.0,954.0 L1042.5,953.0 L1043.0,952.1 L1043.5,951.2 L1044.0,950.3 L1044.5,949.5 L1045.0,948.7 L1045.5,948.0 L1046.0,947.4 L1046.5,946.8 L1047.0,946.3 L1047.5,946.0 L1048.0,945.7 L1048.5,945.6 L1049.0,945.5 L1049.5,945.6 L1050.0,945.7 L1050.5,946.0 L1051.0,946.3 L1051.5,946.8 L1052.0,947.4 L1052.5,948.0 L1053.0,948.7 L1053.5,949.5 L1054.0,950.3 L1054.5,951.2 L1055.0,952.1 L1055.5,953.0 L1056.0,954.0 L1056.5,955.0 L1057.0,955.9 L1057.5,956.8 L1058.0,957.7 L1058.5,958.5 L1059.0,959.3 L1059.5,960.0 L1060.0,960.6 L1060.5,961.2 L1061.0,961.7 L1061.5,962.0 L1062.0,962.3 L1062.5,962.4 L1063.0,962.5 L1063.5,962.4 L1064.0,962.3 L1064.5,962.0 L1065.0,961.7 L1065.5,961.2 L1066.0,960.6 L1066.5,960.0 L1067.0,959.3 L1067.5,958.5 L1068.0,957.7 L1068.5,956.8 L1069.0,955.9 L1069.5,955.0 L1070.0,954.0" fill="none" stroke="#ff0000" stroke-width="1.1"/>
<path d="M1089.0,948.5 L1089.5,946.5 L1090.0,946.4 L1090.5,947.1 L1091.0,947.0 L1091.5,947.0 L1092.0,948.6 L1092.5,950.7 L1093.0,951.1 L1093.5,950.0 L1094.0,949.3 L1094.5,949.3 L1095.0,948.2 L1095.5,946.2 L1096.0,945.6 L1096.5,947.0 L1097.0,948.3 L1097.5,948.5 L1098.0,949.1 L1098.5,950.7 L1099.0,951.4 L1099.5,950.1 L1100.0,948.2 L1100.5,947.7 L1101.0,947.6 L1101.5,946.5 L1102.0,945.8 L1102.5,947.0 L1103.0,949.2 L1103.5,950.1 L1104.0,949.9 L1104.5,950.1 L1105.0,950.8 L1105.5,949.9 L1106.0,947.6 L1106.5,946.3 L1107.0,946.7 L1107.5,947.2 L1108.0,946.9 L1108.5,947.5 L1109.0,949.6 L1109.5,951.2 L1110.0,950.7 L1110.5,949.6 L1111.0,949.3 L1111.5,949.0 L1112.0,947.4 L1112.5,945.7 L1113.0,946.0 L1113.5,947.6 L1114.0,948.5 L1114.5,948.6 L1115.0,949.7 L1115.5,951.2 L1116.0,951.1 L1116.5,949.2 L1117.0,947.8 L1117.5,947.7" fill="none" stroke="#ff0000" stroke-width="1"/><polygon points="1117.3,948.5 1121,945.9 1121,951.1" fill="#000080"/>
<path d="M1089.0,959.5 L1089.5,957.5 L1090.0,957.4 L1090.5,958.1 L1091.0,958.0 L1091.5,958.0 L1092.0,959.6 L1092.5,961.7 L1093.0,962.1 L1093.5,961.0 L1094.0,960.3 L1094.5,960.3 L1095.0,959.2 L1095.5,957.2 L1096.0,956.6 L1096.5,958.0 L1097.0,959.3 L1097.5,959.5 L1098.0,960.1 L1098.5,961.7 L1099.0,962.4 L1099.5,961.1 L1100.0,959.2 L1100.5,958.7 L1101.0,958.6 L1101.5,957.5 L1102.0,956.8 L1102.5,958.0 L1103.0,960.2 L1103.5,961.1 L1104.0,960.9 L1104.5,961.1 L1105.0,961.8 L1105.5,960.9 L1106.0,958.6 L1106.5,957.3 L1107.0,957.7 L1107.5,958.2 L1108.0,957.9 L1108.5,958.5 L1109.0,960.6 L1109.5,962.2 L1110.0,961.7 L1110.5,960.6 L1111.0,960.3 L1111.5,960.0 L1112.0,958.4 L1112.5,956.7 L1113.0,957.0 L1113.5,958.6 L1114.0,959.5 L1114.5,959.6 L1115.0,960.7 L1115.5,962.2 L1116.0,962.1 L1116.5,960.2 L1117.0,958.8 L1117.5,958.7" fill="none" stroke="#0000ff" stroke-width="1"/><polygon points="1117.3,959.5 1121,956.9 1121,962.1" fill="#000080"/>
<text x="1138.5" y="949" font-size="6.3px" font-weight="bold" fill="#000" letter-spacing="0.1" textLength="15.6" lengthAdjust="spacingAndGlyphs">AUTO</text>
<path d="M1138,952.5 C1143,950 1150,950 1155,952.5" stroke="#0040ff" stroke-width="1.2" fill="none"/><polygon points="1137,950.5 1137,954.5 1140.5,952" fill="#0040ff"/><polygon points="1156,950.5 1156,954.5 1152.5,952" fill="#0040ff"/>
<circle cx="1146.5" cy="958.5" r="5" fill="#fff" stroke="#000" stroke-width="1.3"/><circle cx="1146.5" cy="958.5" r="6.8" fill="none" stroke="#000" stroke-width="1" stroke-dasharray="1.5 1.5"/><path d="M1144.3,956.5 L1146.5,961 L1148.7,956.5" stroke="#0000c0" stroke-width="1.1" fill="none"/>
<polygon points="1006.3,974.3 1006.3,994.2 1016.3,984.2" fill="#00ff00" stroke="#008000" stroke-width="0.8"/>
<text x="1138.5" y="979.5" font-size="6.3px" font-weight="bold" fill="#000" letter-spacing="0.1" textLength="15.6" lengthAdjust="spacingAndGlyphs">AUTO</text>
<path d="M1135,986.5 H1140" stroke="#0000ff" stroke-width="1.4"/><polygon points="1139,983.5 1139,989.5 1143,986.5" fill="#0000ff"/>
<path d="M1138,994 C1146,997 1144,982 1150,982 C1152,982 1152,984 1152,985" fill="none" stroke="#a00000" stroke-width="1.1"/><path d="M1145,986.5 H1149" stroke="#808080" stroke-width="0.8" stroke-dasharray="1 1"/>
<polygon points="1152,981.5 1152,992.5 1158,987" fill="#00e000" stroke="#006000" stroke-width="0.8"/>
</svg>
<div class="a" style="left:1181.3px;top:940px;width:48.6px;height:27.5px;border:1px solid #707070;border-radius:3px;background:linear-gradient(#f8f8f8,#e8e8e8 50%,#d4d4d4)"></div>
<div class="a" style="left:1181.3px;top:970.5px;width:48.6px;height:27.5px;border:1px solid #707070;border-radius:3px;background:linear-gradient(#f8f8f8,#e8e8e8 50%,#d4d4d4)"></div>
<div class="arr" style="left:1216px;top:951.5px;border-left-width:4px;border-right-width:4px"></div><div class="arr" style="left:1216px;top:982px;border-left-width:4px;border-right-width:4px"></div>
<svg class="a" style="left:1181px;top:940px" width="50" height="60" viewBox="1181 940 50 60">
<circle cx="1199" cy="954" r="10.5" fill="#f8f8f8" stroke="#000" stroke-width="1.1"/><path d="M1199,947 V956 L1203,950" stroke="#606060" stroke-width="1.3" fill="none"/>
<path d="M1187,947 H1192 V944.5 L1197.5,949.5 L1192,954.5 V952 H1187Z" fill="#30a8a0" stroke="#104040" stroke-width="0.9"/>
<circle cx="1199" cy="984.5" r="10.5" fill="#f8f8f8" stroke="#000" stroke-width="1.1"/><path d="M1199,977 V986.5 L1203,980.5" stroke="#707070" stroke-width="1.3" fill="none"/>
<path d="M1201,987.5 H1206 V985 L1211.5,990 L1206,995 V992.5 H1201Z" fill="#f020d0" stroke="#400040" stroke-width="0.9"/>
</svg>
<div class="a" style="left:4px;top:1002px;width:1680px;height:1px;background:#a0a0a0"></div>
<div class="a" style="left:4px;top:1003px;width:1680px;height:1px;background:#ffffff"></div>
<div class="st" style="left:4px;width:189px">USB Осциллограф  2.01.970</div>
<div class="st" style="left:195px;width:1439px"></div>
<div class="st" style="left:1636px;width:48px;padding-left:2px">2.4</div>
</body></html>
